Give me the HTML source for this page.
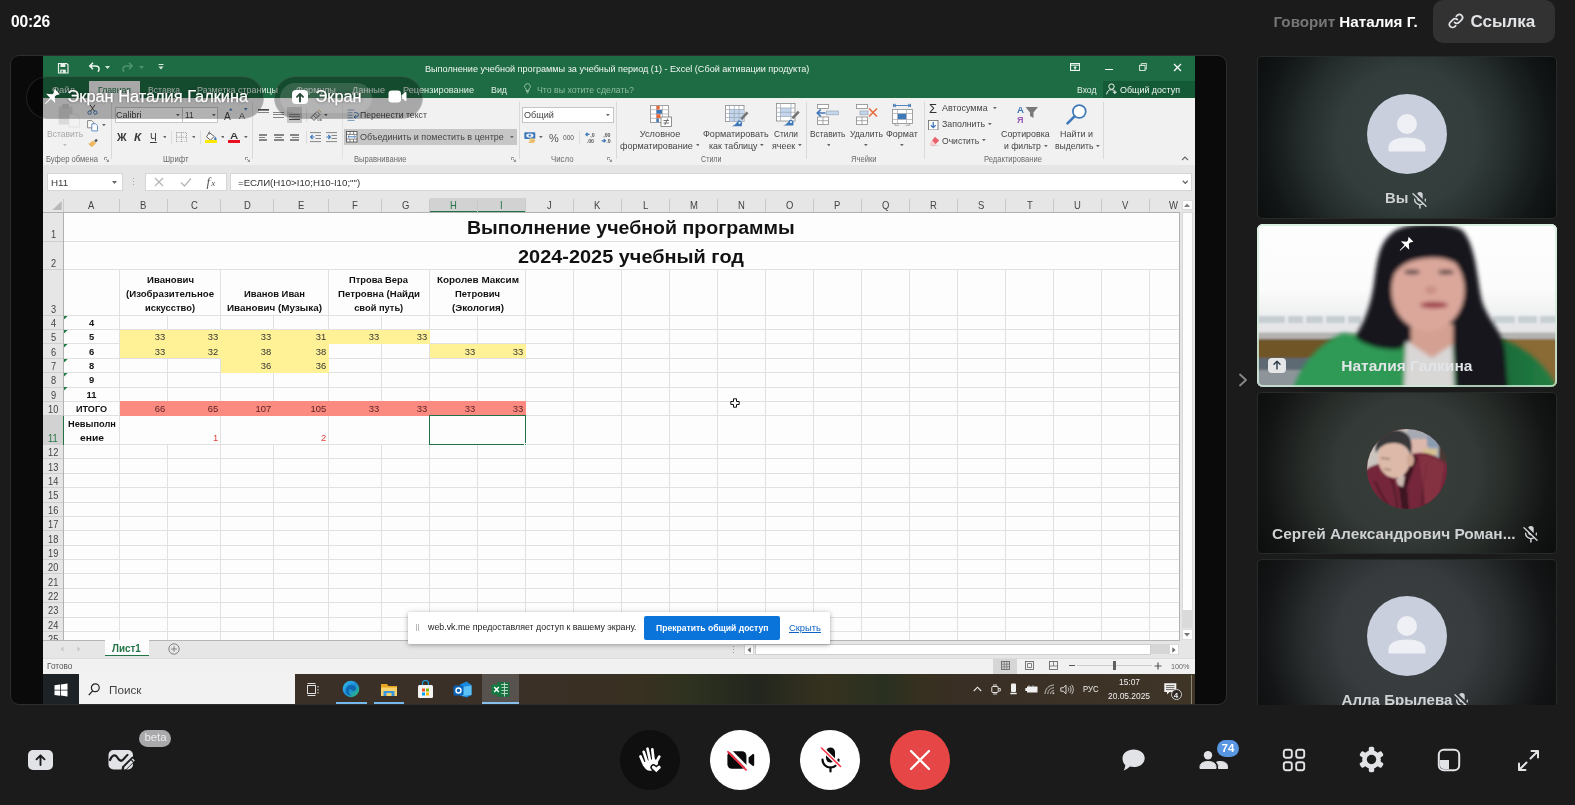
<!DOCTYPE html>
<html lang="ru"><head><meta charset="utf-8"><title>Call</title>
<style>
*{box-sizing:border-box;margin:0;padding:0}
html,body{width:1575px;height:805px;overflow:hidden;background:#1b1b1b;font-family:"Liberation Sans",sans-serif;}
.abs{position:absolute}
#root{position:relative;width:1575px;height:805px;overflow:hidden;background:#1b1b1b;opacity:.999}
.t{position:absolute;white-space:nowrap;line-height:1}
/* top bar */
#timer{left:11px;top:14px;font-size:15.600px;font-weight:bold;color:#fff;letter-spacing:-0.2px}
#speaks{left:1273.500px;top:13.500px;font-size:15.200px;font-weight:bold;color:#fff}
#speaks span{color:#767676}
#linkbtn{left:1433px;top:0;width:122px;height:43px;border-radius:10px;background:#323232}
#linkbtn .t{left:37.500px;top:13px;font-size:17px;font-weight:bold;color:#e1e3e6}
/* screen */
#screen{left:10px;top:55px;width:1217px;height:650px;border-radius:9px;background:#0a0a0a;border:1px solid #2e2e2e;overflow:hidden}
#xl{position:absolute;left:32px;top:0;width:1152px;height:648px;background:#e6e6e6;overflow:hidden;filter:blur(.35px)}
/* tiles */
.tile{position:absolute;left:1257px;width:300px;height:162.600px;border-radius:5px;overflow:hidden;border:1px solid #262a2a}
.av{position:absolute;left:109px;top:36.700px;width:80px;height:80px;border-radius:50%;background:#c9cfdc;overflow:hidden}
.nm{position:absolute;white-space:nowrap;line-height:1;font-weight:bold;font-size:15px;color:#cfd1d3}
/* bottom */
.cbtn{position:absolute;top:730px;width:60px;height:60px;border-radius:50%}
</style></head><body><div id="root">
<div id="timer" class="t">00:26</div>
<div id="speaks" class="t"><span>Говорит</span> Наталия Г.</div>
<div id="linkbtn" class="abs">
<svg class="abs" style="left:14px;top:12px" width="18" height="18" viewBox="0 0 18 18" fill="none" stroke="#e1e3e6" stroke-width="1.7" stroke-linecap="round"><path d="M7.6 10.4a3.1 3.1 0 0 0 4.4 0l2.6-2.6a3.1 3.1 0 0 0-4.4-4.4l-.9.9"/><path d="M10.4 7.6a3.1 3.1 0 0 0-4.4 0l-2.6 2.6a3.1 3.1 0 0 0 4.4 4.4l.9-.9"/></svg>
<div class="t">Ссылка</div></div>
<!-- sidebar tiles -->
<svg width="0" height="0" style="position:absolute"><defs>
<symbol id="person" viewBox="0 0 80 80"><circle cx="40" cy="30" r="10" fill="#eff0f5"/><path d="M22 57v-3.500c0-6 6-9.500 18-9.500s18 3.500 18 9.500V57z" fill="#eff0f5" stroke="#eff0f5" stroke-width="1" stroke-linejoin="round"/></symbol>
<symbol id="micoff" viewBox="0 0 16 18"><mask id="mm"><rect width="16" height="18" fill="#fff"/><path d="M2 1.300L15.300 14.100" stroke="#000" stroke-width="2.400"/></mask><g mask="url(#mm)"><rect x="5.100" y=".9" width="5.600" height="9.300" rx="2.800" fill="#d0d2d5"/><path d="M2.600 8.200a5.400 5.400 0 0 0 10.800 0" fill="none" stroke="#d0d2d5" stroke-width="1.400" stroke-linecap="round"/><path d="M7.900 13.900v3" stroke="#d0d2d5" stroke-width="1.500" stroke-linecap="round"/></g><path d="M1 2.700L14 15.300" stroke="#d0d2d5" stroke-width="1.400" stroke-linecap="round"/></symbol>
</defs></svg>
<div class="tile" style="top:56px;background:radial-gradient(circle 170px at 50% 50%,#354140 0%,#323d3c 41%,#2e3837 47%,#262e2d 60%,#1a2020 73%,#121616 84%,#0c0e0e 100%)">
<div class="av"><svg width="80" height="80"><use href="#person"/></svg></div>
<div class="nm" style="left:127px;top:133.700px;font-size:14.800px">Вы</div>
<svg class="abs" style="left:153.500px;top:133.500px" width="16" height="18"><use href="#micoff"/></svg>
</div>
<!-- tile 2 webcam -->
<div class="tile" id="cam" style="top:224px;height:163px;border:none;border-radius:6px;background:#fbfbfb">
<svg class="abs" style="left:0;top:0" width="300" height="163" viewBox="0 0 300 163">
<defs><filter id="bl" x="-20%" y="-20%" width="140%" height="140%"><feGaussianBlur stdDeviation="2"/></filter><filter id="bl2" x="-20%" y="-20%" width="140%" height="140%"><feGaussianBlur stdDeviation="1"/></filter><filter id="bl3" x="-30%" y="-30%" width="160%" height="160%"><feGaussianBlur stdDeviation="3.500"/></filter>
<linearGradient id="bgw" x1="0" y1="0" x2="0" y2="1"><stop offset="0" stop-color="#fefefe"/><stop offset=".4" stop-color="#fbfbfb"/><stop offset=".56" stop-color="#eeeff0"/></linearGradient>
<linearGradient id="jk" x1="0" y1="0" x2="1" y2="0"><stop offset="0" stop-color="#2f9a55"/><stop offset=".45" stop-color="#2a8d4c"/><stop offset=".7" stop-color="#1a6a38"/><stop offset="1" stop-color="#237f44"/></linearGradient></defs>
<rect width="300" height="163" fill="url(#bgw)"/>
<g filter="url(#bl2)">
<rect x="0" y="92" width="104" height="7" fill="#c6ced3"/><rect x="236" y="92" width="64" height="7" fill="#c8d0d4"/>
<rect x="28" y="92" width="3" height="7" fill="#e8ecee"/><rect x="46" y="92" width="3" height="7" fill="#e8ecee"/><rect x="66" y="92" width="3" height="7" fill="#e8ecee"/><rect x="88" y="92" width="3" height="7" fill="#e8ecee"/><rect x="258" y="92" width="3" height="7" fill="#e8ecee"/><rect x="280" y="92" width="3" height="7" fill="#e8ecee"/>
<rect x="0" y="99" width="300" height="10" fill="#e6e6e8"/>
<rect x="0" y="108.500" width="300" height="6.500" fill="#b4b3b1"/>
<rect x="0" y="115" width="300" height="50" fill="#705428"/>
<rect x="250" y="115" width="50" height="50" fill="#8a6a35"/>
<rect x="0" y="134" width="58" height="30" fill="#5d6973"/><rect x="0" y="146" width="46" height="18" fill="#8e959a"/>
</g>
<g filter="url(#bl)">
<path d="M36 165c6-20 22-44 50-56l40 6 26 50z" fill="#2f9a55"/>
<path d="M120 165l10-50 20-4 50 2 44 2c24 8 42 24 54 44v8z" fill="url(#jk)"/>
<path d="M149 112l-2 53h50l-2-53z" fill="#d9d6d6"/>
<path d="M135 9C147-3 194-3 206 7c12 14 14 44 18 66 4 20 20 32 24 52l3 40h-52l-3-46-46-1-6 7c-14 2-36-2-46-12 10-16 16-32 19-54 3-22 5-40 18-50z" fill="#15151b"/>
<path d="M154 100h42v20l-21 14-21-14z" fill="#d3a092"/>
<ellipse cx="171" cy="66" rx="36.500" ry="41" fill="#dba79b"/>
<path d="M133 58c-3-34 15-53 41-53s41 18 38 50c-6-14-18-22-38-21-22 1-33 7-41 24z" fill="#17161c"/>
<ellipse cx="177" cy="81" rx="14" ry="3.200" fill="#9e3d4c"/>
<ellipse cx="155" cy="48" rx="8" ry="2.300" fill="#4a3b3d"/><ellipse cx="189" cy="48" rx="8" ry="2.300" fill="#4a3b3d"/>
<ellipse cx="174" cy="66" rx="6" ry="4" fill="#c98f85"/>
</g>
</svg>
<div class="abs" style="left:0;top:0;width:300px;height:163px;border:2.500px solid rgba(208,236,216,.8);border-radius:6px"></div>
<svg class="abs" style="left:142px;top:12px" width="15.500" height="15.500" viewBox="0 0 17 17"><path d="M10.500 .8l5.300 5.400-3.600 1-1.400 1.400.4 6.400-4.200-4.100-5.700 5.300-.5-.5 5.300-5.700L2 5.800l6.400.4 1.400-1.400z" fill="#fff"/></svg>
<div class="abs" style="left:11px;top:133.500px;width:18px;height:15px;border-radius:4px;background:#e4e6e8"></div>
<svg class="abs" style="left:15px;top:136px" width="10" height="10" viewBox="0 0 10 10" fill="none" stroke="#2a3a4a" stroke-width="1.400" stroke-linecap="round" stroke-linejoin="round"><path d="M5 9V1.500M2 4.300l3-3 3 3"/></svg>
<div class="nm" style="left:84.300px;top:133.700px;font-size:15.500px;color:#e2e5e8">Наталия Галкина</div>
</div>
<svg class="abs" style="left:1238px;top:373px" width="10" height="14" viewBox="0 0 10 14" fill="none" stroke="#8a8a8a" stroke-width="1.800" stroke-linecap="round" stroke-linejoin="round"><path d="M2 1.500l6 5.500-6 5.500"/></svg>
<!-- tile 3 -->
<div class="tile" style="top:391.500px;background:radial-gradient(circle 170px at 50% 48%,#373e3a 0%,#343a37 41%,#2f3532 47%,#272c29 60%,#1c1f1d 73%,#131514 84%,#0c0e0d 100%)">
<div class="av" style="background:#7a2a34">
<svg width="80" height="80" viewBox="0 0 80 80"><defs><filter id="b3" x="-10%" y="-10%" width="120%" height="120%"><feGaussianBlur stdDeviation="1.100"/></filter></defs><g filter="url(#b3)"><rect x="-5" y="-5" width="90" height="90" fill="#cbc5bf"/><rect x="40" y="-2" width="44" height="32" fill="#a7aab2"/><rect x="44" y="10" width="18" height="16" fill="#dcb7ac"/><rect x="60" y="6" width="14" height="12" fill="#8a9bb0"/><rect x="56" y="20" width="14" height="6" fill="#d4c090"/><rect x="72" y="14" width="12" height="30" fill="#4a3832"/>
<path d="M-4 43C4 36 14 33 21 36l13 17 12-28c9-3 21 0 30 7l10 9v46H-4z" fill="#74283a"/><path d="M8 52c4 10 8 18 16 28M60 34c-2 16-6 30-4 46M22 44c4 10 8 22 8 36" stroke="#591c2a" stroke-width="2.500" fill="none"/>
<path d="M52 26c10 0 20 4 26 10l-6 30-14 10z" fill="#8c3646" opacity=".7"/>
<path d="M46 24l4 6-10 28 2 24h-7l-3-24z" fill="#3d1820"/>
<path d="M29 50l9-3-2 11-5-2z" fill="#cbbab2"/>
<ellipse cx="27" cy="30" rx="16" ry="19" transform="rotate(-8 27 30)" fill="#dcb9a9"/>
<ellipse cx="43.500" cy="31" rx="3.500" ry="6.500" fill="#d0a795"/>
<path d="M9 24C6 8 19 0 30 1c11 1 17 9 14 25-3-8-9-12-17-12-8 0-14 3-18 10z" fill="#37373a"/>
<path d="M14 29l9 1M17 40l7 1" stroke="#9a7a70" stroke-width="1.400"/>
</g></svg></div>
<div class="nm" style="left:14px;top:133px;font-size:15.450px">Сергей Александрович Роман...</div>
<svg class="abs" style="left:265px;top:132.500px" width="16" height="18"><use href="#micoff"/></svg>
</div>
<!-- tile 4 -->
<div class="abs" style="left:1250px;top:555px;width:320px;height:149.700px;overflow:hidden">
<div class="tile" style="left:7px;top:4px;background:radial-gradient(circle 170px at 50% 48%,#3a3f41 0%,#373b3d 41%,#323638 47%,#292d2e 60%,#1d2020 73%,#141516 84%,#0d0e0e 100%)">
<div class="av" style="top:36px"><svg width="80" height="80"><use href="#person"/></svg></div>
<div class="nm" style="left:83.500px;top:131.700px;font-size:15.100px">Алла Брылева</div>
<svg class="abs" style="left:195.500px;top:131.500px" width="16" height="18"><use href="#micoff"/></svg>
</div></div>
<!-- bottom bar -->
<div class="abs" style="left:28px;top:750px;width:25px;height:20px;border-radius:5px;background:#e1e3e6"></div>
<svg class="abs" style="left:34px;top:753px" width="13" height="14" viewBox="0 0 13 14" fill="none" stroke="#1b1b1b" stroke-width="1.900" stroke-linecap="round" stroke-linejoin="round"><path d="M6.500 12V2.500M2.500 6.300l4-4 4 4"/></svg>
<!-- whiteboard -->
<svg class="abs" style="left:107px;top:748px" width="30" height="24" viewBox="0 0 30 24"><rect x="1.500" y="2" width="24.500" height="19.500" rx="5" fill="#e1e3e6"/><path d="M3 12c2-5 5-6 7-3s3 4.500 5 3.500 3-3.500 5.500-5.500" fill="none" stroke="#1b1b1b" stroke-width="2.200" stroke-linecap="round"/><path d="M14 23.500l1.200-5 9.300-9.300a2 2 0 0 1 2.800 0l1 1a2 2 0 0 1 0 2.800L19 22.300z" fill="#1b1b1b"/><path d="M16.800 21.500l.6-2.600 8.400-8.400 2 2-8.400 8.400z" fill="#e1e3e6"/><path d="M24.300 11.800l2 2" stroke="#1b1b1b" stroke-width="1.200"/></svg>
<div class="abs" style="left:139px;top:730px;width:32px;height:17px;border-radius:9px;background:#a9a9ac"></div>
<div class="t" style="left:144.400px;top:732.300px;font-size:11.400px;color:#ececec">beta</div>
<!-- center buttons -->
<div class="cbtn" style="left:620px;background:#0f0f0f"></div>
<svg class="abs" style="left:637px;top:746px" width="27" height="29" viewBox="0 0 27 29"><g stroke="#fff" stroke-width="2.700" stroke-linecap="round" fill="none"><path d="M3.500 10.500L7.200 19"/><path d="M6.700 5.900L10.200 16.500"/><path d="M10.500 2.700L13 14.500"/><path d="M15.300 3.400L16.600 14.500"/><path d="M22.300 10.700L18.600 17.500"/></g><path d="M5.800 16.500L17.500 12.500l3.500 3.500c.5 6-3.500 9.200-8.300 8.700-4-.4-6.200-3.700-6.900-8.200z" fill="#fff"/><path d="M19.300 27.400l-4.400-4.300c-2.300-2.400.8-5.500 3.200-3.600l1.200 1 1.200-1c2.400-1.900 5.500 1.200 3.200 3.600z" fill="#fff" stroke="#0f0f0f" stroke-width="1.500"/></svg>
<div class="cbtn" style="left:710px;background:#fff"></div>
<svg class="abs" style="left:726px;top:748px" width="30" height="24" viewBox="0 0 30 24"><rect x="1.400" y="3.200" width="19" height="17.600" rx="4.500" fill="#0a0a0a"/><path d="M22.600 9.600l3.600-3.200c.8-.7 2-.2 2 .9v9.400c0 1.100-1.200 1.600-2 .9l-3.600-3.200z" fill="#0a0a0a"/><path d="M3.700 2.100L21.700 20.100" stroke="#fff" stroke-width="2.800" stroke-linecap="butt"/><path d="M2 3.800L20 21.800" stroke="#ff3347" stroke-width="1.900" stroke-linecap="round"/></svg>
<div class="cbtn" style="left:800px;background:#fff"></div>
<svg class="abs" style="left:817px;top:746px" width="26" height="28" viewBox="0 0 26 28"><rect x="9" y="1.500" width="9" height="15" rx="4.500" fill="#0a0a0a"/><path d="M5.500 13.500a8 8 0 0 0 16 0" fill="none" stroke="#0a0a0a" stroke-width="2.200" stroke-linecap="round"/><path d="M13.500 21.500v4" stroke="#0a0a0a" stroke-width="2.200" stroke-linecap="round"/><path d="M4.500 2L23.500 20.500" stroke="#fff" stroke-width="4.200" stroke-linecap="round"/><path d="M4.500 2L23.500 20.500" stroke="#ff3347" stroke-width="1.600" stroke-linecap="round"/></svg>
<div class="cbtn" style="left:890px;background:#e64646"></div>
<svg class="abs" style="left:909px;top:749px" width="22" height="22" viewBox="0 0 22 22" stroke="#fff" stroke-width="2.300" stroke-linecap="round"><path d="M2 2l18 18M20 2L2 20"/></svg>
<!-- right icons -->
<svg class="abs" style="left:1121px;top:748px" width="25" height="25" viewBox="0 0 25 25"><path d="M12.700 1.500c6.300 0 11 3.900 11 8.800s-4.700 8.800-11 8.800c-1.300 0-2.500-.2-3.700-.5-1.500 1.400-3.800 3.200-6.500 4 1.200-1.600 1.700-3.800 1.800-5.500C2.500 15.500 1.500 13 1.500 10.300c0-4.900 4.900-8.800 11.200-8.800z" fill="#e1e3e6"/></svg>
<svg class="abs" style="left:1199px;top:750px" width="30" height="20" viewBox="0 0 30 20"><circle cx="9" cy="5.200" r="4.200" fill="#e1e3e6"/><path d="M1 18.500v-1.600c0-3.500 3-5.400 8-5.400s8 1.900 8 5.400v1.600z" fill="#e1e3e6" stroke="#e1e3e6" stroke-linejoin="round"/><path d="M19.500 18.500v-1.800c0-2-.7-3.500-2-4.600 1-.4 2.200-.6 3.500-.6 4.500 0 7.500 1.800 7.500 5v2z" fill="#e1e3e6" stroke="#e1e3e6" stroke-linejoin="round"/></svg>
<div class="abs" style="left:1217px;top:740px;width:22px;height:16.500px;border-radius:9px;background:#5896e2"></div>
<div class="t" style="left:1221.500px;top:742.500px;font-size:11.500px;font-weight:bold;color:#fff">74</div>
<svg class="abs" style="left:1282px;top:748px" width="24" height="24" viewBox="0 0 24 24" fill="none" stroke="#e1e3e6" stroke-width="1.900"><rect x="1.800" y="1.800" width="8" height="8" rx="2.200"/><rect x="14.200" y="1.800" width="8" height="8" rx="2.200"/><rect x="1.800" y="14.200" width="8" height="8" rx="2.200"/><rect x="14.200" y="14.200" width="8" height="8" rx="2.200"/></svg>
<svg class="abs" style="left:1358px;top:746px" width="27" height="27" viewBox="0 0 27 27"><g fill="#e1e3e6"><circle cx="13.500" cy="13.500" r="9.300"/><g id="teeth"><rect x="10.800" y="0.800" width="5.400" height="6" rx="1.600"/><rect x="10.800" y="20.200" width="5.400" height="6" rx="1.600"/></g><use href="#teeth" transform="rotate(60 13.500 13.500)"/><use href="#teeth" transform="rotate(120 13.500 13.500)"/></g><circle cx="13.500" cy="13.500" r="4.700" fill="#1b1b1b"/></svg>
<svg class="abs" style="left:1437px;top:748px" width="24" height="24" viewBox="0 0 24 24"><rect x="1.800" y="1.800" width="20.400" height="20.400" rx="5" fill="none" stroke="#e1e3e6" stroke-width="2"/><path d="M3 12h9v9H7a4 4 0 0 1-4-4z" fill="#e1e3e6"/></svg>
<svg class="abs" style="left:1517px;top:749px" width="23" height="23" viewBox="0 0 23 23" fill="none" stroke="#e1e3e6" stroke-width="2" stroke-linecap="round" stroke-linejoin="round"><path d="M13.500 9.500L21 2M14.500 2H21v6.500M9.500 13.500L2 21M2 14.500V21h6.500"/></svg>
<div id="screen" class="abs"><div id="xl">
<div class="abs" style="left:0px;top:0px;width:1152px;height:42.3px;background:#1e6c43;"></div>
<div class="t" style="left:382px;top:7.63px;font-size:8.7px;line-height:10px;color:#f2f7f4;transform:scaleX(1.047);transform-origin:0 0;">Выполнение учебной программы за учебный период (1) - Excel (Сбой активации продукта)</div>
<svg class="abs" style="left:14px;top:6px;" width="12" height="12" viewBox="0 0 12 12"><path d="M1.500 1.500h8.200l1.300 1.300v8.200h-9.500z" fill="none" stroke="#e9f1ec" stroke-width="1.200"/><rect x="3.400" y="1.800" width="5" height="3.200" fill="#e9f1ec"/><rect x="3.200" y="7.600" width="5.600" height="3.400" fill="#e9f1ec"/><rect x="4.600" y="8.600" width="1.200" height="2" fill="#1f6e43"/></svg>
<svg class="abs" style="left:45px;top:5px;" width="13" height="12" viewBox="0 0 13 12"><path d="M5 1.800L1.800 5 5 8.200M2 5h5.500c2.200 0 3.600 1.400 3.600 3.200 0 1-.4 1.800-1.300 2.400" fill="none" stroke="#f2f7f4" stroke-width="1.500"/></svg>
<svg class="abs" style="left:62px;top:10px;" width="5" height="3" viewBox="0 0 5 3"><path d="M0 0h5L2.500 3z" fill="#d7e6dd"/></svg>
<svg class="abs" style="left:78px;top:5px;" width="13" height="12" viewBox="0 0 13 12"><path d="M8 1.800L11.200 5 8 8.200M11 5H5.500C3.300 5 1.900 6.400 1.900 8.200c0 1 .4 1.800 1.300 2.400" fill="none" stroke="#4f9370" stroke-width="1.500"/></svg>
<svg class="abs" style="left:96px;top:10px;" width="5" height="3" viewBox="0 0 5 3"><path d="M0 0h5L2.500 3z" fill="#4f9370"/></svg>
<svg class="abs" style="left:115px;top:8px;" width="6" height="6" viewBox="0 0 6 6"><path d="M.5 0h5v1h-5zM.5 2.500h5L3 5.500z" fill="#d7e6dd"/></svg>
<svg class="abs" style="left:1027px;top:7.2px;" width="10.2" height="8" viewBox="0 0 10.2 8"><rect x=".55" y=".55" width="9.100" height="6.900" fill="none" stroke="#f2f7f4" stroke-width="1.100"/><path d=".55 2.300h9.100" stroke="#f2f7f4" stroke-width="1"/><path d="M.5 2.200h9.200" stroke="#f2f7f4" stroke-width="1"/><path d="M5.100 3l1.900 1.800H5.800v1.700H4.400V4.800H3.200z" fill="#f2f7f4"/></svg>
<div class="abs" style="left:1062px;top:13px;width:8px;height:1.3px;background:#f2f7f4;"></div>
<svg class="abs" style="left:1096px;top:6.7px;" width="8.4" height="8.2" viewBox="0 0 8.4 8.2"><path d="M2.300 2.300V.6h5.500v5.300H6.100" fill="none" stroke="#dfeae4" stroke-width="1"/><rect x=".6" y="2.400" width="5.500" height="5.200" fill="none" stroke="#dfeae4" stroke-width="1"/></svg>
<svg class="abs" style="left:1130px;top:7px;" width="9" height="9" viewBox="0 0 9 9"><path d="M1 1l7 7M8 1L1 8" stroke="#fff" stroke-width="1.300"/></svg>
<div class="abs" style="left:46px;top:25px;width:50.5px;height:17.3px;background:#f1f1f1;"></div>
<div class="t" style="left:9px;top:28.58px;font-size:9.3px;line-height:10.69px;color:#e4efe8;transform:scaleX(1.006);transform-origin:0 0;">Файл</div>
<div class="t" style="left:55px;top:28.58px;font-size:9.3px;line-height:10.69px;color:#1f6e43;transform:scaleX(0.932);transform-origin:0 0;">Главная</div>
<div class="t" style="left:105px;top:28.58px;font-size:9.3px;line-height:10.69px;color:#e4efe8;transform:scaleX(0.926);transform-origin:0 0;">Вставка</div>
<div class="t" style="left:154px;top:28.58px;font-size:9.3px;line-height:10.69px;color:#e4efe8;transform:scaleX(0.960);transform-origin:0 0;">Разметка страницы</div>
<div class="t" style="left:253px;top:28.58px;font-size:9.3px;line-height:10.69px;color:#e4efe8;transform:scaleX(0.988);transform-origin:0 0;">Формулы</div>
<div class="t" style="left:309px;top:28.58px;font-size:9.3px;line-height:10.69px;color:#e4efe8;transform:scaleX(0.982);transform-origin:0 0;">Данные</div>
<div class="t" style="left:360px;top:28.58px;font-size:9.3px;line-height:10.69px;color:#e4efe8;transform:scaleX(0.989);transform-origin:0 0;">Рецензирование</div>
<div class="t" style="left:448px;top:28.58px;font-size:9.3px;line-height:10.69px;color:#e4efe8;transform:scaleX(0.951);transform-origin:0 0;">Вид</div>
<svg class="abs" style="left:481px;top:27px;" width="7" height="11" viewBox="0 0 7 11"><path d="M3.500 .7a2.800 2.800 0 0 0-1.500 5.200v1.600h3V5.900A2.800 2.800 0 0 0 3.500.7z" fill="none" stroke="#9fc7b0" stroke-width=".9"/><path d="M2.200 8.600h2.600M2.600 9.900h1.800" stroke="#9fc7b0" stroke-width=".9"/></svg>
<div class="t" style="left:493.5px;top:28.58px;font-size:9.3px;line-height:10.69px;color:#8fbda3;transform:scaleX(0.943);transform-origin:0 0;">Что вы хотите сделать?</div>
<div class="t" style="left:1033.5px;top:29.08px;font-size:9.3px;line-height:10.69px;color:#e4efe8;transform:scaleX(0.927);transform-origin:0 0;">Вход</div>
<div class="abs" style="left:1060px;top:25px;width:92px;height:17.3px;background:#155a36;"></div>
<svg class="abs" style="left:1063px;top:27px;" width="11" height="12" viewBox="0 0 11 12"><circle cx="5.500" cy="3.600" r="2.700" fill="none" stroke="#f2f7f4" stroke-width="1"/><path d="M.7 11.300c.3-3 2-4.600 4.800-4.600 1 0 1.800.2 2.500.6" fill="none" stroke="#f2f7f4" stroke-width="1"/><path d="M8.800 7.300v3.800M6.900 9.200h3.800" stroke="#f2f7f4" stroke-width="1"/></svg>
<div class="t" style="left:1077px;top:29.08px;font-size:9.3px;line-height:10.69px;color:#f2f7f4;transform:scaleX(0.960);transform-origin:0 0;">Общий доступ</div>
<div class="abs" style="left:0px;top:42.3px;width:1152px;height:66.4px;background:#f1f1f1;"></div>
<div class="abs" style="left:0px;top:108.7px;width:1152px;height:48px;background:#e6e6e6;"></div>
<div class="abs" style="left:68px;top:46px;width:1px;height:57px;background:#d9d9d9;"></div>
<div class="abs" style="left:209.3px;top:46px;width:1px;height:57px;background:#d9d9d9;"></div>
<div class="abs" style="left:476.2px;top:46px;width:1px;height:57px;background:#d9d9d9;"></div>
<div class="abs" style="left:573.2px;top:46px;width:1px;height:57px;background:#d9d9d9;"></div>
<div class="abs" style="left:763px;top:46px;width:1px;height:57px;background:#d9d9d9;"></div>
<div class="abs" style="left:880.5px;top:46px;width:1px;height:57px;background:#d9d9d9;"></div>
<div class="abs" style="left:1060.2px;top:46px;width:1px;height:57px;background:#d9d9d9;"></div>
<div class="t" style="left:2.5px;top:99.09px;font-size:8.3px;line-height:9.54px;color:#6a6a6a;transform:scaleX(0.922);transform-origin:0 0;">Буфер обмена</div>
<div class="t" style="left:120.25px;top:99.09px;font-size:8.3px;line-height:9.54px;color:#6a6a6a;transform:scaleX(0.934);transform-origin:0 0;">Шрифт</div>
<div class="t" style="left:311.25px;top:99.09px;font-size:8.3px;line-height:9.54px;color:#6a6a6a;transform:scaleX(0.919);transform-origin:0 0;">Выравнивание</div>
<div class="t" style="left:507.75px;top:99.09px;font-size:8.3px;line-height:9.54px;color:#6a6a6a;transform:scaleX(0.943);transform-origin:0 0;">Число</div>
<div class="t" style="left:657.75px;top:99.09px;font-size:8.3px;line-height:9.54px;color:#6a6a6a;transform:scaleX(0.857);transform-origin:0 0;">Стили</div>
<div class="t" style="left:808.25px;top:99.09px;font-size:8.3px;line-height:9.54px;color:#6a6a6a;transform:scaleX(0.916);transform-origin:0 0;">Ячейки</div>
<div class="t" style="left:941px;top:99.09px;font-size:8.3px;line-height:9.54px;color:#6a6a6a;transform:scaleX(0.917);transform-origin:0 0;">Редактирование</div>
<svg class="abs" style="left:60.5px;top:101.3px;" width="5" height="5" viewBox="0 0 5 5"><path d="M.4 3V.4h2.600M2 2l2.600 2.600M4.700 2.600v2.100H2.600" fill="none" stroke="#777" stroke-width=".8"/></svg>
<svg class="abs" style="left:201.5px;top:101.3px;" width="5" height="5" viewBox="0 0 5 5"><path d="M.4 3V.4h2.600M2 2l2.600 2.600M4.700 2.600v2.100H2.600" fill="none" stroke="#777" stroke-width=".8"/></svg>
<svg class="abs" style="left:468px;top:101.3px;" width="5" height="5" viewBox="0 0 5 5"><path d="M.4 3V.4h2.600M2 2l2.600 2.600M4.700 2.600v2.100H2.600" fill="none" stroke="#777" stroke-width=".8"/></svg>
<svg class="abs" style="left:564px;top:101.3px;" width="5" height="5" viewBox="0 0 5 5"><path d="M.4 3V.4h2.600M2 2l2.600 2.600M4.700 2.600v2.100H2.600" fill="none" stroke="#777" stroke-width=".8"/></svg>
<svg class="abs" style="left:1138px;top:100px;" width="8" height="5" viewBox="0 0 8 5"><path d="M1 4l3-3 3 3" fill="none" stroke="#666" stroke-width="1.100"/></svg>
<svg class="abs" style="left:13.5px;top:47px;" width="24" height="24.5" viewBox="0 0 24 24.5"><g opacity=".55"><rect x="1.500" y="3.500" width="14" height="18" rx="1.200" fill="#c9c9c9"/><rect x="5" y="1" width="7" height="4.500" rx="1" fill="#b9b9b9"/><path d="M12 11h7l3.500 3.500V24H12z" fill="#f4f4f4" stroke="#cfcfcf" stroke-width=".8"/></g></svg>
<div class="t" style="left:3.8px;top:72.87px;font-size:9.2px;line-height:10.57px;color:#a6a6a6;transform:scaleX(0.928);transform-origin:0 0;">Вставить</div>
<svg class="abs" style="left:20.02px;top:88.33px;" width="3.96" height="2.34" viewBox="0 0 4.400 2.600"><path d="M0 0h4.400L2.200 2.600z" fill="#bdbdbd"/></svg>
<svg class="abs" style="left:44px;top:47.5px;" width="11" height="11" viewBox="0 0 11 11"><path d="M3 .8l4.600 6.600M8 .8L3.400 7.400" stroke="#4a4a4a" stroke-width="1" fill="none"/><circle cx="2.600" cy="8.600" r="1.700" fill="none" stroke="#3f78b8" stroke-width="1"/><circle cx="8.400" cy="8.600" r="1.700" fill="none" stroke="#3f78b8" stroke-width="1"/></svg>
<svg class="abs" style="left:44px;top:64px;" width="11.5" height="11.5" viewBox="0 0 11.5 11.5"><path d="M.6 .6h4.200l1.800 1.800v5.400h-6z" fill="#fff" stroke="#6a6a6a" stroke-width=".8"/><path d="M4.800 3.800h3.800l1.900 1.900v5.200H4.800z" fill="#fff" stroke="#3f78b8" stroke-width=".8"/></svg>
<svg class="abs" style="left:59.11px;top:68.18px;" width="3.78" height="2.24" viewBox="0 0 4.400 2.600"><path d="M0 0h4.400L2.200 2.600z" fill="#666"/></svg>
<svg class="abs" style="left:45px;top:81.5px;" width="10.5" height="9.5" viewBox="0 0 10.5 9.5"><path d="M6.200 2.800l2-2 1.600 1.600-2 2z" fill="#555"/><path d="M1 5.500l4-3 3 3-4 3.500z" fill="#f0b861"/><path d="M.8 5.700l3 3" stroke="#d99a3a" stroke-width=".8"/></svg>
<div class="abs" style="left:71.5px;top:51.3px;width:68.2px;height:16px;background:#fff;border:1px solid #c6c6c6;"></div>
<div class="abs" style="left:139.7px;top:51.3px;width:35.5px;height:16px;background:#fff;border:1px solid #c6c6c6;border-left:none;"></div>
<div class="t" style="left:73.2px;top:54.27px;font-size:9.2px;line-height:10.57px;color:#444;transform:scaleX(0.978);transform-origin:0 0;">Calibri</div>
<svg class="abs" style="left:133.01px;top:57.68px;" width="3.78" height="2.24" viewBox="0 0 4.400 2.600"><path d="M0 0h4.400L2.200 2.600z" fill="#666"/></svg>
<div class="t" style="left:142px;top:54.27px;font-size:9.2px;line-height:10.57px;color:#444;transform:scaleX(0.900);transform-origin:0 0;">11</div>
<svg class="abs" style="left:169.11px;top:57.68px;" width="3.78" height="2.24" viewBox="0 0 4.400 2.600"><path d="M0 0h4.400L2.200 2.600z" fill="#666"/></svg>
<div class="t" style="left:180.5px;top:53.73px;font-size:10.8px;line-height:12.41px;color:#444;transform:scaleX(0.944);transform-origin:0 0;">A</div>
<svg class="abs" style="left:186px;top:52px;" width="3.5" height="2.5" viewBox="0 0 3.5 2.5"><path d="M0 2.500h3.500L1.750 0z" fill="#3f78b8"/></svg>
<div class="t" style="left:195.8px;top:54.99px;font-size:9.4px;line-height:10.8px;color:#444;transform:scaleX(0.957);transform-origin:0 0;">A</div>
<svg class="abs" style="left:201px;top:52px;" width="3.5" height="2.5" viewBox="0 0 3.5 2.5"><path d="M0 0h3.500L1.750 2.500z" fill="#3f78b8"/></svg>
<div class="t" style="left:74.4px;top:75.55px;font-size:10px;line-height:11.49px;color:#3a3a3a;font-weight:bold;transform:scaleX(1.062);transform-origin:0 0;">Ж</div>
<div class="t" style="left:91px;top:75.55px;font-size:10px;line-height:11.49px;color:#3a3a3a;font-weight:bold;font-style:italic;transform:scaleX(1.171);transform-origin:0 0;">К</div>
<div class="t" style="left:106.7px;top:75.55px;font-size:10px;line-height:11.49px;color:#3a3a3a;transform:scaleX(1.020);transform-origin:0 0;text-decoration:underline;">Ч</div>
<svg class="abs" style="left:119.51px;top:79.68px;" width="3.78" height="2.24" viewBox="0 0 4.400 2.600"><path d="M0 0h4.400L2.200 2.600z" fill="#666"/></svg>
<div class="abs" style="left:128.3px;top:74.5px;width:1px;height:13.5px;background:#dcdcdc;"></div>
<svg class="abs" style="left:133px;top:75.5px;" width="11.5" height="10.5" viewBox="0 0 11.5 10.5"><path d="M.5 .5h10v9.500H.5zM.5 5.200h10M5.500 .5v9.500" fill="none" stroke="#8a8a8a" stroke-width=".8" stroke-dasharray="1.100 1"/></svg>
<svg class="abs" style="left:148.51px;top:79.68px;" width="3.78" height="2.24" viewBox="0 0 4.400 2.600"><path d="M0 0h4.400L2.200 2.600z" fill="#666"/></svg>
<div class="abs" style="left:157.2px;top:74.5px;width:1px;height:13.5px;background:#dcdcdc;"></div>
<svg class="abs" style="left:162px;top:74.5px;" width="12.5" height="10" viewBox="0 0 12.5 10"><path d="M4.200 1.500l5 3.800-3.600 3.900-4-3.400z" fill="#fdfdfd" stroke="#555" stroke-width=".9"/><path d="M4.600 .5c-1 1-.8 2.300.3 3" fill="none" stroke="#555" stroke-width=".8"/><path d="M10.300 5.500c.9 1.300 1.300 2.100 1.300 2.700a1.200 1.200 0 0 1-2.400 0c0-.6.400-1.400 1.100-2.700z" fill="#3f78b8"/></svg>
<div class="abs" style="left:161.8px;top:84px;width:12.3px;height:3px;background:#ffe800;"></div>
<svg class="abs" style="left:177.51px;top:79.68px;" width="3.78" height="2.24" viewBox="0 0 4.400 2.600"><path d="M0 0h4.400L2.200 2.600z" fill="#666"/></svg>
<div class="t" style="left:187.3px;top:74.43px;font-size:9.8px;line-height:11.26px;color:#3a3a3a;font-weight:bold;transform:scaleX(1.159);transform-origin:0 0;">A</div>
<div class="abs" style="left:185.2px;top:84px;width:12.2px;height:3px;background:#e81123;"></div>
<svg class="abs" style="left:200.81px;top:79.68px;" width="3.78" height="2.24" viewBox="0 0 4.400 2.600"><path d="M0 0h4.400L2.200 2.600z" fill="#666"/></svg>
<div class="abs" style="left:215px;top:53.3px;width:10.5px;height:1.3px;background:#858585;"></div>
<div class="abs" style="left:215px;top:55.9px;width:10.5px;height:1.3px;background:#858585;"></div>
<div class="abs" style="left:215px;top:52.9px;width:10.5px;height:0.9px;background:#444;"></div>
<div class="abs" style="left:230.2px;top:55.5px;width:10.5px;height:1.3px;background:#858585;"></div>
<div class="abs" style="left:230.2px;top:58px;width:10.5px;height:1.3px;background:#858585;"></div>
<div class="abs" style="left:230.2px;top:60.5px;width:10.5px;height:1.3px;background:#858585;"></div>
<div class="abs" style="left:243.8px;top:51.2px;width:15.2px;height:16px;background:#c6c6c6;"></div>
<div class="abs" style="left:246px;top:57.5px;width:10.5px;height:1.3px;background:#858585;"></div>
<div class="abs" style="left:246px;top:60px;width:10.5px;height:1.3px;background:#858585;"></div>
<div class="abs" style="left:246px;top:62.7px;width:10.5px;height:1.2px;background:#444;"></div>
<div class="abs" style="left:262.5px;top:52px;width:1px;height:14px;background:#dcdcdc;"></div>
<svg class="abs" style="left:266.5px;top:52.5px;" width="12" height="12" viewBox="0 0 12 12"><path d="M1 8.500l6-6 3 3-6 6z" fill="none" stroke="#555" stroke-width=".9"/><path d="M3.300 6.200l3 3M5 4.500l3 3" stroke="#555" stroke-width=".7"/><path d="M8.500 .8l2.700 2.700" stroke="#c28b2c" stroke-width="1"/><path d="M7 11h4.500M10 9.600l1.500 1.400-1.500 1.400" stroke="#555" stroke-width=".7" fill="none"/></svg>
<svg class="abs" style="left:280.81px;top:57.68px;" width="3.78" height="2.24" viewBox="0 0 4.400 2.600"><path d="M0 0h4.400L2.200 2.600z" fill="#666"/></svg>
<div class="abs" style="left:298.7px;top:46px;width:1px;height:57px;background:#e2e2e2;"></div>
<svg class="abs" style="left:303.5px;top:52.5px;" width="12" height="12.5" viewBox="0 0 12 12.5"><path d="M.5 1h7M.5 3.600h5M.5 6.200h5M.5 8.800h5M.5 11.400h7" stroke="#6b8db5" stroke-width=".9"/><path d="M7 3.600h2.200a2.200 2.200 0 0 1 0 4.400H7.500" fill="none" stroke="#3f78b8" stroke-width="1"/><path d="M8.700 6.300L7 8l1.700 1.700" fill="none" stroke="#3f78b8" stroke-width="1"/></svg>
<div class="t" style="left:317px;top:53.67px;font-size:9.2px;line-height:10.57px;color:#444;transform:scaleX(0.946);transform-origin:0 0;">Перенести текст</div>
<div class="abs" style="left:215.5px;top:78.3px;width:8px;height:1.3px;background:#858585;"></div>
<div class="abs" style="left:215.5px;top:80.8px;width:6px;height:1.3px;background:#858585;"></div>
<div class="abs" style="left:215.5px;top:83.3px;width:8px;height:1.3px;background:#858585;"></div>
<div class="abs" style="left:230.8px;top:78.3px;width:10px;height:1.3px;background:#858585;"></div>
<div class="abs" style="left:232.3px;top:80.8px;width:7px;height:1.3px;background:#858585;"></div>
<div class="abs" style="left:230.8px;top:83.3px;width:10px;height:1.3px;background:#858585;"></div>
<div class="abs" style="left:246.5px;top:78.3px;width:9px;height:1.3px;background:#858585;"></div>
<div class="abs" style="left:249px;top:80.8px;width:6.5px;height:1.3px;background:#858585;"></div>
<div class="abs" style="left:246.5px;top:83.3px;width:9px;height:1.3px;background:#858585;"></div>
<div class="abs" style="left:262.5px;top:74.5px;width:1px;height:13.5px;background:#dcdcdc;"></div>
<svg class="abs" style="left:267px;top:76px;" width="11" height="10.5" viewBox="0 0 11 10.5"><path d="M0 .6h11M5.500 3.500H11M5.500 6.500H11M0 9.600h11" stroke="#7a7a7a" stroke-width=".9"/><path d="M4.600 5H.8M2.600 3L.6 5l2 2" fill="none" stroke="#3f78b8" stroke-width="1.200"/></svg>
<svg class="abs" style="left:282.5px;top:76px;" width="11" height="10.5" viewBox="0 0 11 10.5"><path d="M0 .6h11M5.500 3.500H11M5.500 6.500H11M0 9.600h11" stroke="#7a7a7a" stroke-width=".9"/><path d="M.4 5h3.800M2.400 3l2 2-2 2" fill="none" stroke="#3f78b8" stroke-width="1.200"/></svg>
<div class="abs" style="left:301.3px;top:73.2px;width:172.7px;height:15.8px;background:#c6c6c6;"></div>
<svg class="abs" style="left:303px;top:75px;" width="11.5" height="11.5" viewBox="0 0 11.5 11.5"><rect x=".5" y=".5" width="10.500" height="10.500" fill="#fff" stroke="#555" stroke-width=".9"/><path d="M.5 3.400h10.500M.5 8.100h10.500M4 .5v2.900M7.500 .5v2.900M4 8.100V11M7.500 8.100V11" stroke="#555" stroke-width=".7"/><path d="M2 5.750h7.500M3.300 4.500L2 5.750 3.300 7M8.200 4.500l1.300 1.250L8.200 7" fill="none" stroke="#3f78b8" stroke-width=".9"/></svg>
<div class="t" style="left:317px;top:75.77px;font-size:9.2px;line-height:10.57px;color:#444;transform:scaleX(0.979);transform-origin:0 0;">Объединить и поместить в центре</div>
<svg class="abs" style="left:467.11px;top:79.68px;" width="3.78" height="2.24" viewBox="0 0 4.400 2.600"><path d="M0 0h4.400L2.200 2.600z" fill="#666"/></svg>
<div class="abs" style="left:479.2px;top:51.2px;width:91.6px;height:16px;background:#fff;border:1px solid #c6c6c6;"></div>
<div class="t" style="left:481.2px;top:53.97px;font-size:9.2px;line-height:10.57px;color:#444;transform:scaleX(0.991);transform-origin:0 0;">Общий</div>
<svg class="abs" style="left:563.41px;top:57.68px;" width="3.78" height="2.24" viewBox="0 0 4.400 2.600"><path d="M0 0h4.400L2.200 2.600z" fill="#666"/></svg>
<svg class="abs" style="left:481px;top:75.5px;" width="12.5" height="11.5" viewBox="0 0 12.5 11.5"><rect x=".3" y=".3" width="11" height="6.600" rx=".8" fill="#3f78b8"/><ellipse cx="5.800" cy="3.600" rx="3.600" ry="2.100" fill="#eef3fa"/><circle cx="5.800" cy="3.600" r="1.200" fill="#3f78b8"/><ellipse cx="8" cy="7.300" rx="3" ry="1.100" fill="#f2cf82"/><ellipse cx="8.500" cy="8.800" rx="3" ry="1.100" fill="#e9b657"/><ellipse cx="7.300" cy="10.300" rx="3" ry="1.100" fill="#efc170"/></svg>
<svg class="abs" style="left:496.41px;top:79.88px;" width="3.78" height="2.24" viewBox="0 0 4.400 2.600"><path d="M0 0h4.400L2.200 2.600z" fill="#666"/></svg>
<div class="t" style="left:505.7px;top:75.74px;font-size:11px;line-height:12.64px;color:#555;transform:scaleX(0.992);transform-origin:0 0;">%</div>
<div class="t" style="left:520px;top:77.51px;font-size:6.4px;line-height:7.35px;color:#555;transform:scaleX(1.030);transform-origin:0 0;">000</div>
<div class="abs" style="left:536px;top:74.5px;width:1px;height:13.5px;background:#dcdcdc;"></div>
<svg class="abs" style="left:542px;top:75.5px;" width="10.5" height="11.5" viewBox="0 0 10.5 11.5"><path d="M4.600 2.400H.9M2.500 .8L.9 2.400 2.500 4" fill="none" stroke="#3f78b8" stroke-width="1.300"/><text x="5.200" y="4.600" font-size="5.200" font-weight="bold" fill="#555" font-family="Liberation Sans">,0</text><text x="1.800" y="10.600" font-size="5.200" font-weight="bold" fill="#555" font-family="Liberation Sans">,00</text></svg>
<svg class="abs" style="left:557.5px;top:75.5px;" width="10.5" height="11.5" viewBox="0 0 10.5 11.5"><text x="2.200" y="4.600" font-size="5.200" font-weight="bold" fill="#555" font-family="Liberation Sans">,00</text><path d="M.6 8.800h3.800M2.700 7.200l1.700 1.600-1.700 1.600" fill="none" stroke="#3f78b8" stroke-width="1.300"/><text x="5.200" y="10.600" font-size="5.200" font-weight="bold" fill="#555" font-family="Liberation Sans">,0</text></svg>
<svg class="abs" style="left:606.5px;top:49px;" width="22.5" height="22" viewBox="0 0 22.5 22"><rect x=".5" y=".5" width="18" height="17" fill="#fff" stroke="#8a8a8a" stroke-width=".8"/><path d="M.5 4.700h18M.5 9h18M.5 13.300h18M6.500 .5v17M12.500 .5v17" stroke="#a8a8a8" stroke-width=".7"/><rect x="6.500" y=".8" width="3.200" height="3.700" fill="#e8683c"/><rect x="6.500" y="4.900" width="5.500" height="3.900" fill="#3f78b8"/><rect x="6.500" y="9.200" width="4" height="3.900" fill="#e8683c"/><rect x="6.500" y="13.500" width="2.400" height="3.700" fill="#3f78b8"/><rect x="11" y="12" width="10.500" height="9.500" fill="#fff" stroke="#777" stroke-width=".8"/><path d="M13.500 15.500h5.500M13.500 18h5.500M17.800 13.500L14.800 20" stroke="#555" stroke-width=".8"/></svg>
<div class="t" style="left:596.75px;top:72.87px;font-size:9.2px;line-height:10.57px;color:#444;">Условное</div>
<div class="t" style="left:577.3px;top:84.87px;font-size:9.2px;line-height:10.57px;color:#444;transform:scaleX(0.986);transform-origin:0 0;">форматирование</div>
<svg class="abs" style="left:652.61px;top:87.68px;" width="3.78" height="2.24" viewBox="0 0 4.400 2.600"><path d="M0 0h4.400L2.200 2.600z" fill="#666"/></svg>
<svg class="abs" style="left:682px;top:49px;" width="24" height="22" viewBox="0 0 24 22"><rect x=".5" y=".5" width="18.500" height="16" fill="#fff" stroke="#8a8a8a" stroke-width=".8"/><rect x="4.500" y="4.500" width="14.500" height="12" fill="#c3d6ec"/><path d="M.5 4.500h18.500M.5 8.500h18.500M.5 12.500h18.500M4.500 .5v16M9.300 .5v16M14 .5v16" stroke="#9aa6b4" stroke-width=".7"/><path d="M15.300 13.300l6.300-6.800 1.900 1.700-6.300 6.800z" fill="#757575"/><path d="M6.500 21.300c3-1 5-3 6.600-5.600 1.500-.8 3.600.3 4 2.200l-.3 3.400z" fill="#3f78b8"/><circle cx="14.600" cy="17.800" r="1.100" fill="#e8eef6"/></svg>
<div class="t" style="left:659.65px;top:72.87px;font-size:9.2px;line-height:10.57px;color:#444;transform:scaleX(0.984);transform-origin:0 0;">Форматировать</div>
<div class="t" style="left:665.9px;top:84.87px;font-size:9.2px;line-height:10.57px;color:#444;transform:scaleX(0.965);transform-origin:0 0;">как таблицу</div>
<svg class="abs" style="left:716.81px;top:87.68px;" width="3.78" height="2.24" viewBox="0 0 4.400 2.600"><path d="M0 0h4.400L2.200 2.600z" fill="#666"/></svg>
<svg class="abs" style="left:733px;top:47px;" width="23.5" height="24" viewBox="0 0 23.5 24"><rect x=".5" y=".5" width="18.500" height="17.500" fill="#fff" stroke="#8a8a8a" stroke-width=".8"/><rect x="4.500" y="5" width="10.500" height="8.500" fill="#c3d6ec"/><path d="M.5 5h18.500M.5 9.300h18.500M.5 13.500h18.500M4.500 .5v17.500M15 .5v17.500" stroke="#9aa6b4" stroke-width=".7"/><path d="M15.500 14.600l6.300-6.800 1.900 1.700-6.300 6.800z" fill="#757575"/><path d="M7 22.600c3-1 5-3 6.600-5.600 1.500-.8 3.600.3 4 2.200l-.3 3.400z" fill="#3f78b8"/><circle cx="15" cy="19.100" r="1.100" fill="#e8eef6"/></svg>
<div class="t" style="left:731.4px;top:72.87px;font-size:9.2px;line-height:10.57px;color:#444;transform:scaleX(0.906);transform-origin:0 0;">Стили</div>
<div class="t" style="left:729.05px;top:84.87px;font-size:9.2px;line-height:10.57px;color:#444;transform:scaleX(0.969);transform-origin:0 0;">ячеек</div>
<svg class="abs" style="left:754.91px;top:87.68px;" width="3.78" height="2.24" viewBox="0 0 4.400 2.600"><path d="M0 0h4.400L2.200 2.600z" fill="#666"/></svg>
<svg class="abs" style="left:773px;top:48px;" width="23" height="21" viewBox="0 0 23 21"><rect x="1.500" y=".5" width="11" height="4" fill="#fff" stroke="#8a8a8a" stroke-width=".8"/><rect x="1.500" y="13" width="11" height="7.500" fill="#fff" stroke="#8a8a8a" stroke-width=".8"/><path d="M1.500 16.700h11M7 13v7.500" stroke="#8a8a8a" stroke-width=".7"/><rect x="10.500" y="7" width="12" height="3.800" fill="#c3d6ec" stroke="#9aa6b4" stroke-width=".7"/><path d="M9.500 9H1.500M4.800 5.500L1.300 9l3.500 3.500" fill="none" stroke="#3f78b8" stroke-width="1.700"/></svg>
<div class="t" style="left:767.25px;top:73.17px;font-size:9.2px;line-height:10.57px;color:#444;transform:scaleX(0.910);transform-origin:0 0;">Вставить</div>
<svg class="abs" style="left:783.51px;top:88.38px;" width="3.78" height="2.24" viewBox="0 0 4.400 2.600"><path d="M0 0h4.400L2.200 2.600z" fill="#666"/></svg>
<svg class="abs" style="left:813px;top:48px;" width="22" height="21" viewBox="0 0 22 21"><rect x=".5" y=".5" width="11" height="4" fill="#fff" stroke="#8a8a8a" stroke-width=".8"/><rect x=".5" y="13" width="11" height="7.500" fill="#fff" stroke="#8a8a8a" stroke-width=".8"/><path d="M.5 16.700h11M6 13v7.500" stroke="#8a8a8a" stroke-width=".7"/><rect x="4" y="7" width="8" height="3.800" fill="#c3d6ec" stroke="#9aa6b4" stroke-width=".7"/><path d="M13 4.500l8 8M21 4.500l-8 8" stroke="#e8683c" stroke-width="1.500"/></svg>
<div class="t" style="left:806.5px;top:73.17px;font-size:9.2px;line-height:10.57px;color:#444;transform:scaleX(0.939);transform-origin:0 0;">Удалить</div>
<svg class="abs" style="left:821.11px;top:88.38px;" width="3.78" height="2.24" viewBox="0 0 4.400 2.600"><path d="M0 0h4.400L2.200 2.600z" fill="#666"/></svg>
<svg class="abs" style="left:848.5px;top:46.5px;" width="21.5" height="23" viewBox="0 0 21.5 23"><path d="M1.500 2.500h17M1.500 .8v3.400M18.500 .8v3.400M4 1l-2.500 1.500L4 4M16 1l2.500 1.500L16 4" fill="none" stroke="#3f78b8" stroke-width=".9"/><rect x=".5" y="6.500" width="20" height="14" fill="#fff" stroke="#8a8a8a" stroke-width=".8"/><path d="M.5 10.500h20M.5 16.500h20M5.500 6.500v14M14.500 6.500v14" stroke="#a8a8a8" stroke-width=".7"/><rect x="5.800" y="10.800" width="8.400" height="5.400" fill="#3f78b8"/><path d="M3 20.500v1.800h4M17.500 20.500v1.800h-4" fill="none" stroke="#8a8a8a" stroke-width=".7"/></svg>
<div class="t" style="left:843.3px;top:73.17px;font-size:9.2px;line-height:10.57px;color:#444;transform:scaleX(0.973);transform-origin:0 0;">Формат</div>
<svg class="abs" style="left:857.21px;top:88.38px;" width="3.78" height="2.24" viewBox="0 0 4.400 2.600"><path d="M0 0h4.400L2.200 2.600z" fill="#666"/></svg>
<div class="t" style="left:886px;top:46.64px;font-size:12px;line-height:13.79px;color:#333;transform:scaleX(1.078);transform-origin:0 0;">Σ</div>
<div class="t" style="left:898.7px;top:47.47px;font-size:9.2px;line-height:10.57px;color:#444;transform:scaleX(0.974);transform-origin:0 0;">Автосумма</div>
<svg class="abs" style="left:950.11px;top:51.28px;" width="3.78" height="2.24" viewBox="0 0 4.400 2.600"><path d="M0 0h4.400L2.200 2.600z" fill="#666"/></svg>
<svg class="abs" style="left:885px;top:63.5px;" width="10.5" height="10.5" viewBox="0 0 10.5 10.5"><rect x=".5" y=".5" width="9.500" height="9.500" fill="#fff" stroke="#777" stroke-width=".9"/><path d="M5.250 2v5.500M2.800 5.300l2.450 2.400L7.700 5.300" fill="none" stroke="#3f78b8" stroke-width="1.300"/></svg>
<div class="t" style="left:898.7px;top:63.17px;font-size:9.2px;line-height:10.57px;color:#444;transform:scaleX(0.956);transform-origin:0 0;">Заполнить</div>
<svg class="abs" style="left:945.11px;top:66.98px;" width="3.78" height="2.24" viewBox="0 0 4.400 2.600"><path d="M0 0h4.400L2.200 2.600z" fill="#666"/></svg>
<svg class="abs" style="left:885.5px;top:79.5px;" width="11" height="10" viewBox="0 0 11 10"><path d="M6 .8l4.200 3.800-5 5H2.500L.8 7.800z" fill="#e8606a"/><path d="M2.800 4.200l3.800 3.800-1.400 1.600H2.500L.8 7.800z" fill="#fbd0d4"/><path d="M1.500 9.700h8" stroke="#bbb" stroke-width=".6"/></svg>
<div class="t" style="left:898.7px;top:79.67px;font-size:9.2px;line-height:10.57px;color:#444;transform:scaleX(0.931);transform-origin:0 0;">Очистить</div>
<svg class="abs" style="left:939.21px;top:83.48px;" width="3.78" height="2.24" viewBox="0 0 4.400 2.600"><path d="M0 0h4.400L2.200 2.600z" fill="#666"/></svg>
<div class="t" style="left:973.5px;top:48.43px;font-size:9.8px;line-height:11.26px;color:#3f78b8;font-weight:bold;transform:scaleX(0.989);transform-origin:0 0;">А</div>
<div class="t" style="left:973.8px;top:58.43px;font-size:9.8px;line-height:11.26px;color:#9b59b6;font-weight:bold;transform:scaleX(0.923);transform-origin:0 0;">Я</div>
<svg class="abs" style="left:981.5px;top:50px;" width="13.5" height="13" viewBox="0 0 13.5 13"><path d="M.5 1h12.500L8.500 6.500V12l-3.500-2V6.500z" fill="#7a7a7a"/></svg>
<div class="t" style="left:958.4px;top:73.17px;font-size:9.2px;line-height:10.57px;color:#444;transform:scaleX(0.966);transform-origin:0 0;">Сортировка</div>
<div class="t" style="left:961.35px;top:84.67px;font-size:9.2px;line-height:10.57px;color:#444;transform:scaleX(0.942);transform-origin:0 0;">и фильтр</div>
<svg class="abs" style="left:1000.91px;top:88.58px;" width="3.78" height="2.24" viewBox="0 0 4.400 2.600"><path d="M0 0h4.400L2.200 2.600z" fill="#666"/></svg>
<svg class="abs" style="left:1023px;top:48px;" width="21.5" height="20.5" viewBox="0 0 21.5 20.5"><circle cx="13.300" cy="7.500" r="6.400" fill="#fff" stroke="#3f78b8" stroke-width="1.700"/><path d="M8.500 12.300L1.500 19.300" stroke="#3f78b8" stroke-width="2.600" stroke-linecap="round"/></svg>
<div class="t" style="left:1017.3px;top:73.17px;font-size:9.2px;line-height:10.57px;color:#444;transform:scaleX(0.972);transform-origin:0 0;">Найти и</div>
<div class="t" style="left:1011.7px;top:84.67px;font-size:9.2px;line-height:10.57px;color:#444;transform:scaleX(0.937);transform-origin:0 0;">выделить</div>
<svg class="abs" style="left:1053.01px;top:88.58px;" width="3.78" height="2.24" viewBox="0 0 4.400 2.600"><path d="M0 0h4.400L2.200 2.600z" fill="#666"/></svg>
<div class="abs" style="left:3.5px;top:117px;width:76.5px;height:17.7px;background:#fff;border:1px solid #d6d6d6;"></div>
<div class="t" style="left:7.8px;top:121.21px;font-size:9.6px;line-height:11.03px;color:#3b3b3b;transform:scaleX(1.018);transform-origin:0 0;">H11</div>
<svg class="abs" style="left:69px;top:124.5px;" width="5" height="3" viewBox="0 0 5 3"><path d="M0 0h5L2.500 3z" fill="#666"/></svg>
<div class="abs" style="left:90.3px;top:121.5px;width:1px;height:1.2px;background:#a8a8a8;"></div>
<div class="abs" style="left:90.3px;top:124.5px;width:1px;height:1.2px;background:#a8a8a8;"></div>
<div class="abs" style="left:90.3px;top:127.5px;width:1px;height:1.2px;background:#a8a8a8;"></div>
<div class="abs" style="left:102px;top:117px;width:82.3px;height:17.7px;background:#fff;border:1px solid #d6d6d6;"></div>
<svg class="abs" style="left:111px;top:120.5px;" width="10" height="10" viewBox="0 0 10 10"><path d="M1 1l8 8M9 1L1 9" stroke="#b5b5b5" stroke-width="1.200"/></svg>
<svg class="abs" style="left:137px;top:120.5px;" width="12" height="10" viewBox="0 0 12 10"><path d="M1 5.500l3.500 3.500L11 1.500" fill="none" stroke="#b5b5b5" stroke-width="1.300"/></svg>
<div class="t" style="left:163.5px;top:118.74px;font-size:13px;line-height:14.94px;color:#555;font-style:italic;font-family:'Liberation Serif',serif;">f</div>
<div class="t" style="left:168.3px;top:122.45px;font-size:9px;line-height:10.34px;color:#555;font-style:italic;font-family:'Liberation Serif',serif;">x</div>
<div class="abs" style="left:186.5px;top:117px;width:962.5px;height:17.7px;background:#fff;border:1px solid #d6d6d6;"></div>
<div class="t" style="left:194.5px;top:121.14px;font-size:9.9px;line-height:11.38px;color:#333;transform:scaleX(0.981);transform-origin:0 0;">=ЕСЛИ(H10&gt;I10;H10-I10;&quot;&quot;)</div>
<svg class="abs" style="left:1138.7px;top:123.8px;" width="6.6" height="4.4" viewBox="0 0 6.6 4.4"><path d="M.8 .8l2.500 2.600L5.800 .8" fill="none" stroke="#6a6a6a" stroke-width="1.300"/></svg>
<div class="abs" style="left:0px;top:141.7px;width:1137px;height:15px;background:#e6e6e6;"></div>
<div class="abs" style="left:0px;top:156.5px;width:20.5px;height:427.5px;background:#e6e6e6;"></div>
<div class="abs" style="left:20.5px;top:156.5px;width:1116.5px;height:427.5px;background:#fdfdfd;"></div>
<div class="abs" style="left:386.5px;top:141.7px;width:96px;height:14px;background:#d2d2d2;"></div>
<div class="abs" style="left:386.5px;top:155.2px;width:96px;height:1.5px;background:#217346;"></div>
<div class="abs" style="left:0px;top:359.8px;width:20px;height:28.8px;background:#d2d2d2;"></div>
<div class="abs" style="left:76.5px;top:273.57px;width:310px;height:14.38px;background:#fff296;"></div>
<div class="abs" style="left:76.5px;top:287.95px;width:209px;height:14.38px;background:#fff296;"></div>
<div class="abs" style="left:386.5px;top:287.95px;width:96px;height:14.38px;background:#fff296;"></div>
<div class="abs" style="left:177.5px;top:302.32px;width:108px;height:14.38px;background:#fff296;"></div>
<div class="abs" style="left:76.5px;top:345.45px;width:406px;height:14.38px;background:#fb8b80;"></div>
<div class="abs" style="left:76px;top:213.8px;width:1px;height:370.2px;background:#e1e1e1;"></div>
<div class="abs" style="left:124px;top:213.8px;width:1px;height:370.2px;background:#e1e1e1;"></div>
<div class="abs" style="left:177px;top:213.8px;width:1px;height:370.2px;background:#e1e1e1;"></div>
<div class="abs" style="left:230px;top:213.8px;width:1px;height:370.2px;background:#e1e1e1;"></div>
<div class="abs" style="left:285px;top:213.8px;width:1px;height:370.2px;background:#e1e1e1;"></div>
<div class="abs" style="left:338px;top:213.8px;width:1px;height:370.2px;background:#e1e1e1;"></div>
<div class="abs" style="left:386px;top:213.8px;width:1px;height:370.2px;background:#e1e1e1;"></div>
<div class="abs" style="left:434px;top:213.8px;width:1px;height:370.2px;background:#e1e1e1;"></div>
<div class="abs" style="left:482px;top:213.8px;width:1px;height:370.2px;background:#e1e1e1;"></div>
<div class="abs" style="left:530px;top:213.8px;width:1px;height:370.2px;background:#e1e1e1;"></div>
<div class="abs" style="left:578px;top:213.8px;width:1px;height:370.2px;background:#e1e1e1;"></div>
<div class="abs" style="left:626px;top:213.8px;width:1px;height:370.2px;background:#e1e1e1;"></div>
<div class="abs" style="left:674px;top:213.8px;width:1px;height:370.2px;background:#e1e1e1;"></div>
<div class="abs" style="left:722px;top:213.8px;width:1px;height:370.2px;background:#e1e1e1;"></div>
<div class="abs" style="left:770px;top:213.8px;width:1px;height:370.2px;background:#e1e1e1;"></div>
<div class="abs" style="left:818px;top:213.8px;width:1px;height:370.2px;background:#e1e1e1;"></div>
<div class="abs" style="left:866px;top:213.8px;width:1px;height:370.2px;background:#e1e1e1;"></div>
<div class="abs" style="left:914px;top:213.8px;width:1px;height:370.2px;background:#e1e1e1;"></div>
<div class="abs" style="left:962px;top:213.8px;width:1px;height:370.2px;background:#e1e1e1;"></div>
<div class="abs" style="left:1010px;top:213.8px;width:1px;height:370.2px;background:#e1e1e1;"></div>
<div class="abs" style="left:1058px;top:213.8px;width:1px;height:370.2px;background:#e1e1e1;"></div>
<div class="abs" style="left:1106px;top:213.8px;width:1px;height:370.2px;background:#e1e1e1;"></div>
<div class="abs" style="left:20.5px;top:184.5px;width:1116.5px;height:1px;background:#e1e1e1;"></div>
<div class="abs" style="left:20.5px;top:213.3px;width:1116.5px;height:1px;background:#e1e1e1;"></div>
<div class="abs" style="left:20.5px;top:258.7px;width:1116.5px;height:1px;background:#e1e1e1;"></div>
<div class="abs" style="left:20.5px;top:273.07px;width:1116.5px;height:1px;background:#e1e1e1;"></div>
<div class="abs" style="left:20.5px;top:287.45px;width:1116.5px;height:1px;background:#e1e1e1;"></div>
<div class="abs" style="left:20.5px;top:301.82px;width:1116.5px;height:1px;background:#e1e1e1;"></div>
<div class="abs" style="left:20.5px;top:316.2px;width:1116.5px;height:1px;background:#e1e1e1;"></div>
<div class="abs" style="left:20.5px;top:330.57px;width:1116.5px;height:1px;background:#e1e1e1;"></div>
<div class="abs" style="left:20.5px;top:344.95px;width:1116.5px;height:1px;background:#e1e1e1;"></div>
<div class="abs" style="left:20.5px;top:359.32px;width:1116.5px;height:1px;background:#e1e1e1;"></div>
<div class="abs" style="left:20.5px;top:388.07px;width:1116.5px;height:1px;background:#e1e1e1;"></div>
<div class="abs" style="left:20.5px;top:402.45px;width:1116.5px;height:1px;background:#e1e1e1;"></div>
<div class="abs" style="left:20.5px;top:416.82px;width:1116.5px;height:1px;background:#e1e1e1;"></div>
<div class="abs" style="left:20.5px;top:431.2px;width:1116.5px;height:1px;background:#e1e1e1;"></div>
<div class="abs" style="left:20.5px;top:445.57px;width:1116.5px;height:1px;background:#e1e1e1;"></div>
<div class="abs" style="left:20.5px;top:459.95px;width:1116.5px;height:1px;background:#e1e1e1;"></div>
<div class="abs" style="left:20.5px;top:474.33px;width:1116.5px;height:1px;background:#e1e1e1;"></div>
<div class="abs" style="left:20.5px;top:488.7px;width:1116.5px;height:1px;background:#e1e1e1;"></div>
<div class="abs" style="left:20.5px;top:503.08px;width:1116.5px;height:1px;background:#e1e1e1;"></div>
<div class="abs" style="left:20.5px;top:517.45px;width:1116.5px;height:1px;background:#e1e1e1;"></div>
<div class="abs" style="left:20.5px;top:531.83px;width:1116.5px;height:1px;background:#e1e1e1;"></div>
<div class="abs" style="left:20.5px;top:546.2px;width:1116.5px;height:1px;background:#e1e1e1;"></div>
<div class="abs" style="left:20.5px;top:560.58px;width:1116.5px;height:1px;background:#e1e1e1;"></div>
<div class="abs" style="left:20.5px;top:574.95px;width:1116.5px;height:1px;background:#e1e1e1;"></div>
<div class="abs" style="left:124px;top:214.3px;width:1px;height:44.4px;background:#fdfdfd;"></div>
<div class="abs" style="left:230px;top:214.3px;width:1px;height:44.4px;background:#fdfdfd;"></div>
<div class="abs" style="left:338px;top:214.3px;width:1px;height:44.4px;background:#fdfdfd;"></div>
<div class="abs" style="left:434px;top:214.3px;width:1px;height:44.4px;background:#fdfdfd;"></div>
<div class="abs" style="left:76.5px;top:273.57px;width:310px;height:14.38px;background:#fff296;"></div>
<div class="abs" style="left:76.5px;top:287.95px;width:209px;height:14.38px;background:#fff296;"></div>
<div class="abs" style="left:386.5px;top:287.95px;width:96px;height:14.38px;background:#fff296;"></div>
<div class="abs" style="left:177.5px;top:302.32px;width:108px;height:14.38px;background:#fff296;"></div>
<div class="abs" style="left:76.5px;top:345.45px;width:406px;height:14.38px;background:#fb8b80;"></div>
<div class="abs" style="left:124px;top:360.32px;width:1px;height:27.75px;background:#fdfdfd;"></div>
<div class="abs" style="left:230px;top:360.32px;width:1px;height:27.75px;background:#fdfdfd;"></div>
<div class="abs" style="left:338px;top:360.32px;width:1px;height:27.75px;background:#fdfdfd;"></div>
<div class="abs" style="left:434px;top:360.32px;width:1px;height:27.75px;background:#fdfdfd;"></div>
<div class="abs" style="left:0px;top:156px;width:1137px;height:1px;background:#b1b1b1;"></div>
<div class="abs" style="left:20px;top:156.5px;width:1px;height:427.5px;background:#b1b1b1;"></div>
<div class="abs" style="left:19.6px;top:359.8px;width:1.2px;height:28.8px;background:#217346;"></div>
<div class="t" style="left:45.34px;top:143.58px;font-size:10.3px;line-height:11.83px;color:#444;transform:scaleX(0.920);transform-origin:0 0;">A</div>
<div class="abs" style="left:76px;top:143px;width:1px;height:13px;background:#c9c9c9;"></div>
<div class="t" style="left:97.34px;top:143.58px;font-size:10.3px;line-height:11.83px;color:#444;transform:scaleX(0.920);transform-origin:0 0;">B</div>
<div class="abs" style="left:124px;top:143px;width:1px;height:13px;background:#c9c9c9;"></div>
<div class="t" style="left:147.58px;top:143.58px;font-size:10.3px;line-height:11.83px;color:#444;transform:scaleX(0.920);transform-origin:0 0;">C</div>
<div class="abs" style="left:177px;top:143px;width:1px;height:13px;background:#c9c9c9;"></div>
<div class="t" style="left:200.58px;top:143.58px;font-size:10.3px;line-height:11.83px;color:#444;transform:scaleX(0.920);transform-origin:0 0;">D</div>
<div class="abs" style="left:230px;top:143px;width:1px;height:13px;background:#c9c9c9;"></div>
<div class="t" style="left:254.84px;top:143.58px;font-size:10.3px;line-height:11.83px;color:#444;transform:scaleX(0.920);transform-origin:0 0;">E</div>
<div class="abs" style="left:285px;top:143px;width:1px;height:13px;background:#c9c9c9;"></div>
<div class="t" style="left:309.11px;top:143.58px;font-size:10.3px;line-height:11.83px;color:#444;transform:scaleX(0.920);transform-origin:0 0;">F</div>
<div class="abs" style="left:338px;top:143px;width:1px;height:13px;background:#c9c9c9;"></div>
<div class="t" style="left:358.81px;top:143.58px;font-size:10.3px;line-height:11.83px;color:#444;transform:scaleX(0.920);transform-origin:0 0;">G</div>
<div class="abs" style="left:386px;top:143px;width:1px;height:13px;background:#c9c9c9;"></div>
<div class="t" style="left:407.08px;top:143.58px;font-size:10.3px;line-height:11.83px;color:#217346;transform:scaleX(0.920);transform-origin:0 0;">H</div>
<div class="abs" style="left:434px;top:143px;width:1px;height:13px;background:#c9c9c9;"></div>
<div class="t" style="left:457.18px;top:143.58px;font-size:10.3px;line-height:11.83px;color:#217346;transform:scaleX(0.920);transform-origin:0 0;">I</div>
<div class="abs" style="left:482px;top:143px;width:1px;height:13px;background:#c9c9c9;"></div>
<div class="t" style="left:504.13px;top:143.58px;font-size:10.3px;line-height:11.83px;color:#444;transform:scaleX(0.920);transform-origin:0 0;">J</div>
<div class="abs" style="left:530px;top:143px;width:1px;height:13px;background:#c9c9c9;"></div>
<div class="t" style="left:551.34px;top:143.58px;font-size:10.3px;line-height:11.83px;color:#444;transform:scaleX(0.920);transform-origin:0 0;">K</div>
<div class="abs" style="left:578px;top:143px;width:1px;height:13px;background:#c9c9c9;"></div>
<div class="t" style="left:599.86px;top:143.58px;font-size:10.3px;line-height:11.83px;color:#444;transform:scaleX(0.920);transform-origin:0 0;">L</div>
<div class="abs" style="left:626px;top:143px;width:1px;height:13px;background:#c9c9c9;"></div>
<div class="t" style="left:646.55px;top:143.58px;font-size:10.3px;line-height:11.83px;color:#444;transform:scaleX(0.920);transform-origin:0 0;">M</div>
<div class="abs" style="left:674px;top:143px;width:1px;height:13px;background:#c9c9c9;"></div>
<div class="t" style="left:695.08px;top:143.58px;font-size:10.3px;line-height:11.83px;color:#444;transform:scaleX(0.920);transform-origin:0 0;">N</div>
<div class="abs" style="left:722px;top:143px;width:1px;height:13px;background:#c9c9c9;"></div>
<div class="t" style="left:742.81px;top:143.58px;font-size:10.3px;line-height:11.83px;color:#444;transform:scaleX(0.920);transform-origin:0 0;">O</div>
<div class="abs" style="left:770px;top:143px;width:1px;height:13px;background:#c9c9c9;"></div>
<div class="t" style="left:791.34px;top:143.58px;font-size:10.3px;line-height:11.83px;color:#444;transform:scaleX(0.920);transform-origin:0 0;">P</div>
<div class="abs" style="left:818px;top:143px;width:1px;height:13px;background:#c9c9c9;"></div>
<div class="t" style="left:838.81px;top:143.58px;font-size:10.3px;line-height:11.83px;color:#444;transform:scaleX(0.920);transform-origin:0 0;">Q</div>
<div class="abs" style="left:866px;top:143px;width:1px;height:13px;background:#c9c9c9;"></div>
<div class="t" style="left:887.08px;top:143.58px;font-size:10.3px;line-height:11.83px;color:#444;transform:scaleX(0.920);transform-origin:0 0;">R</div>
<div class="abs" style="left:914px;top:143px;width:1px;height:13px;background:#c9c9c9;"></div>
<div class="t" style="left:935.34px;top:143.58px;font-size:10.3px;line-height:11.83px;color:#444;transform:scaleX(0.920);transform-origin:0 0;">S</div>
<div class="abs" style="left:962px;top:143px;width:1px;height:13px;background:#c9c9c9;"></div>
<div class="t" style="left:983.61px;top:143.58px;font-size:10.3px;line-height:11.83px;color:#444;transform:scaleX(0.920);transform-origin:0 0;">T</div>
<div class="abs" style="left:1010px;top:143px;width:1px;height:13px;background:#c9c9c9;"></div>
<div class="t" style="left:1031.08px;top:143.58px;font-size:10.3px;line-height:11.83px;color:#444;transform:scaleX(0.920);transform-origin:0 0;">U</div>
<div class="abs" style="left:1058px;top:143px;width:1px;height:13px;background:#c9c9c9;"></div>
<div class="t" style="left:1079.34px;top:143.58px;font-size:10.3px;line-height:11.83px;color:#444;transform:scaleX(0.920);transform-origin:0 0;">V</div>
<div class="abs" style="left:1106px;top:143px;width:1px;height:13px;background:#c9c9c9;"></div>
<div class="t" style="left:1126.03px;top:143.58px;font-size:10.3px;line-height:11.83px;color:#444;transform:scaleX(0.920);transform-origin:0 0;">W</div>
<div class="abs" style="left:20px;top:143px;width:1px;height:13px;background:#c9c9c9;"></div>
<svg class="abs" style="left:9.3px;top:144.8px;" width="9.7" height="9.4" viewBox="0 0 9.7 9.4"><path d="M9.700 0v9.400H0z" fill="#b9b9b9"/></svg>
<div class="t" style="left:7.63px;top:172.3px;font-size:10.5px;line-height:12.06px;color:#444;transform:scaleX(0.880);transform-origin:0 0;">1</div>
<div class="abs" style="left:0px;top:184.5px;width:20px;height:1px;background:#cfcfcf;"></div>
<div class="t" style="left:7.63px;top:201.1px;font-size:10.5px;line-height:12.06px;color:#444;transform:scaleX(0.880);transform-origin:0 0;">2</div>
<div class="abs" style="left:0px;top:213.3px;width:20px;height:1px;background:#cfcfcf;"></div>
<div class="t" style="left:7.63px;top:246.5px;font-size:10.5px;line-height:12.06px;color:#444;transform:scaleX(0.880);transform-origin:0 0;">3</div>
<div class="abs" style="left:0px;top:258.7px;width:20px;height:1px;background:#cfcfcf;"></div>
<div class="t" style="left:7.63px;top:260.87px;font-size:10.5px;line-height:12.06px;color:#444;transform:scaleX(0.880);transform-origin:0 0;">4</div>
<div class="abs" style="left:0px;top:273.07px;width:20px;height:1px;background:#cfcfcf;"></div>
<div class="t" style="left:7.63px;top:275.25px;font-size:10.5px;line-height:12.06px;color:#444;transform:scaleX(0.880);transform-origin:0 0;">5</div>
<div class="abs" style="left:0px;top:287.45px;width:20px;height:1px;background:#cfcfcf;"></div>
<div class="t" style="left:7.63px;top:289.62px;font-size:10.5px;line-height:12.06px;color:#444;transform:scaleX(0.880);transform-origin:0 0;">6</div>
<div class="abs" style="left:0px;top:301.82px;width:20px;height:1px;background:#cfcfcf;"></div>
<div class="t" style="left:7.63px;top:304px;font-size:10.5px;line-height:12.06px;color:#444;transform:scaleX(0.880);transform-origin:0 0;">7</div>
<div class="abs" style="left:0px;top:316.2px;width:20px;height:1px;background:#cfcfcf;"></div>
<div class="t" style="left:7.63px;top:318.37px;font-size:10.5px;line-height:12.06px;color:#444;transform:scaleX(0.880);transform-origin:0 0;">8</div>
<div class="abs" style="left:0px;top:330.57px;width:20px;height:1px;background:#cfcfcf;"></div>
<div class="t" style="left:7.63px;top:332.75px;font-size:10.5px;line-height:12.06px;color:#444;transform:scaleX(0.880);transform-origin:0 0;">9</div>
<div class="abs" style="left:0px;top:344.95px;width:20px;height:1px;background:#cfcfcf;"></div>
<div class="t" style="left:5.06px;top:347.12px;font-size:10.5px;line-height:12.06px;color:#444;transform:scaleX(0.880);transform-origin:0 0;">10</div>
<div class="abs" style="left:0px;top:359.32px;width:20px;height:1px;background:#cfcfcf;"></div>
<div class="t" style="left:5.4px;top:375.87px;font-size:10.5px;line-height:12.06px;color:#217346;transform:scaleX(0.880);transform-origin:0 0;">11</div>
<div class="abs" style="left:0px;top:388.07px;width:20px;height:1px;background:#cfcfcf;"></div>
<div class="t" style="left:5.06px;top:390.25px;font-size:10.5px;line-height:12.06px;color:#444;transform:scaleX(0.880);transform-origin:0 0;">12</div>
<div class="abs" style="left:0px;top:402.45px;width:20px;height:1px;background:#cfcfcf;"></div>
<div class="t" style="left:5.06px;top:404.62px;font-size:10.5px;line-height:12.06px;color:#444;transform:scaleX(0.880);transform-origin:0 0;">13</div>
<div class="abs" style="left:0px;top:416.82px;width:20px;height:1px;background:#cfcfcf;"></div>
<div class="t" style="left:5.06px;top:419px;font-size:10.5px;line-height:12.06px;color:#444;transform:scaleX(0.880);transform-origin:0 0;">14</div>
<div class="abs" style="left:0px;top:431.2px;width:20px;height:1px;background:#cfcfcf;"></div>
<div class="t" style="left:5.06px;top:433.37px;font-size:10.5px;line-height:12.06px;color:#444;transform:scaleX(0.880);transform-origin:0 0;">15</div>
<div class="abs" style="left:0px;top:445.57px;width:20px;height:1px;background:#cfcfcf;"></div>
<div class="t" style="left:5.06px;top:447.75px;font-size:10.5px;line-height:12.06px;color:#444;transform:scaleX(0.880);transform-origin:0 0;">16</div>
<div class="abs" style="left:0px;top:459.95px;width:20px;height:1px;background:#cfcfcf;"></div>
<div class="t" style="left:5.06px;top:462.12px;font-size:10.5px;line-height:12.06px;color:#444;transform:scaleX(0.880);transform-origin:0 0;">17</div>
<div class="abs" style="left:0px;top:474.33px;width:20px;height:1px;background:#cfcfcf;"></div>
<div class="t" style="left:5.06px;top:476.5px;font-size:10.5px;line-height:12.06px;color:#444;transform:scaleX(0.880);transform-origin:0 0;">18</div>
<div class="abs" style="left:0px;top:488.7px;width:20px;height:1px;background:#cfcfcf;"></div>
<div class="t" style="left:5.06px;top:490.87px;font-size:10.5px;line-height:12.06px;color:#444;transform:scaleX(0.880);transform-origin:0 0;">19</div>
<div class="abs" style="left:0px;top:503.08px;width:20px;height:1px;background:#cfcfcf;"></div>
<div class="t" style="left:5.06px;top:505.25px;font-size:10.5px;line-height:12.06px;color:#444;transform:scaleX(0.880);transform-origin:0 0;">20</div>
<div class="abs" style="left:0px;top:517.45px;width:20px;height:1px;background:#cfcfcf;"></div>
<div class="t" style="left:5.06px;top:519.62px;font-size:10.5px;line-height:12.06px;color:#444;transform:scaleX(0.880);transform-origin:0 0;">21</div>
<div class="abs" style="left:0px;top:531.83px;width:20px;height:1px;background:#cfcfcf;"></div>
<div class="t" style="left:5.06px;top:534px;font-size:10.5px;line-height:12.06px;color:#444;transform:scaleX(0.880);transform-origin:0 0;">22</div>
<div class="abs" style="left:0px;top:546.2px;width:20px;height:1px;background:#cfcfcf;"></div>
<div class="t" style="left:5.06px;top:548.37px;font-size:10.5px;line-height:12.06px;color:#444;transform:scaleX(0.880);transform-origin:0 0;">23</div>
<div class="abs" style="left:0px;top:560.58px;width:20px;height:1px;background:#cfcfcf;"></div>
<div class="t" style="left:5.06px;top:562.75px;font-size:10.5px;line-height:12.06px;color:#444;transform:scaleX(0.880);transform-origin:0 0;">24</div>
<div class="abs" style="left:0px;top:574.95px;width:20px;height:1px;background:#cfcfcf;"></div>
<div class="t" style="left:5.06px;top:577.12px;font-size:10.5px;line-height:12.06px;color:#444;transform:scaleX(0.880);transform-origin:0 0;">25</div>
<svg class="abs" style="left:21px;top:259.5px;" width="3.6" height="3.6" viewBox="0 0 3.6 3.6"><path d="M0 0h3.600L0 3.600z" fill="#1f7a45"/></svg>
<svg class="abs" style="left:21px;top:273.88px;" width="3.6" height="3.6" viewBox="0 0 3.6 3.6"><path d="M0 0h3.600L0 3.600z" fill="#1f7a45"/></svg>
<svg class="abs" style="left:21px;top:288.25px;" width="3.6" height="3.6" viewBox="0 0 3.6 3.6"><path d="M0 0h3.600L0 3.600z" fill="#1f7a45"/></svg>
<svg class="abs" style="left:21px;top:302.62px;" width="3.6" height="3.6" viewBox="0 0 3.6 3.6"><path d="M0 0h3.600L0 3.600z" fill="#1f7a45"/></svg>
<svg class="abs" style="left:21px;top:317px;" width="3.6" height="3.6" viewBox="0 0 3.6 3.6"><path d="M0 0h3.600L0 3.600z" fill="#1f7a45"/></svg>
<svg class="abs" style="left:21px;top:331.38px;" width="3.6" height="3.6" viewBox="0 0 3.6 3.6"><path d="M0 0h3.600L0 3.600z" fill="#1f7a45"/></svg>
<div class="t" style="left:424px;top:160.92px;font-size:19.2px;line-height:22.06px;color:#111;font-weight:bold;transform:scaleX(1.019);transform-origin:0 0;">Выполнение учебной программы</div>
<div class="t" style="left:475px;top:189.92px;font-size:19.2px;line-height:22.06px;color:#111;font-weight:bold;transform:scaleX(1.038);transform-origin:0 0;">2024-2025 учебный год</div>
<div class="t" style="left:102px;top:247.38px;font-size:9.3px;line-height:10.69px;color:#111;font-weight:bold;transform:scaleX(1.005);transform-origin:0 0;">искусство)</div>
<div class="t" style="left:83px;top:232.98px;font-size:9.3px;line-height:10.69px;color:#111;font-weight:bold;transform:scaleX(1.039);transform-origin:0 0;">(Изобразительное</div>
<div class="t" style="left:103.5px;top:218.58px;font-size:9.3px;line-height:10.69px;color:#111;font-weight:bold;transform:scaleX(1.031);transform-origin:0 0;">Иванович</div>
<div class="t" style="left:183.5px;top:247.38px;font-size:9.3px;line-height:10.69px;color:#111;font-weight:bold;transform:scaleX(1.061);transform-origin:0 0;">Иванович (Музыка)</div>
<div class="t" style="left:200.5px;top:232.98px;font-size:9.3px;line-height:10.69px;color:#111;font-weight:bold;transform:scaleX(1.015);transform-origin:0 0;">Иванов Иван</div>
<div class="t" style="left:311.2px;top:247.38px;font-size:9.3px;line-height:10.69px;color:#111;font-weight:bold;">свой путь)</div>
<div class="t" style="left:294.7px;top:232.98px;font-size:9.3px;line-height:10.69px;color:#111;font-weight:bold;transform:scaleX(1.037);transform-origin:0 0;">Петровна (Найди</div>
<div class="t" style="left:306.2px;top:218.58px;font-size:9.3px;line-height:10.69px;color:#111;font-weight:bold;transform:scaleX(1.005);transform-origin:0 0;">Птрова Вера</div>
<div class="t" style="left:408.5px;top:247.38px;font-size:9.3px;line-height:10.69px;color:#111;font-weight:bold;transform:scaleX(1.055);transform-origin:0 0;">(Экология)</div>
<div class="t" style="left:412px;top:232.98px;font-size:9.3px;line-height:10.69px;color:#111;font-weight:bold;transform:scaleX(1.012);transform-origin:0 0;">Петрович</div>
<div class="t" style="left:393.5px;top:218.58px;font-size:9.3px;line-height:10.69px;color:#111;font-weight:bold;transform:scaleX(1.064);transform-origin:0 0;">Королев Максим</div>
<div class="t" style="left:45.89px;top:261.87px;font-size:9.4px;line-height:10.8px;color:#111;font-weight:bold;">4</div>
<div class="t" style="left:45.89px;top:276.24px;font-size:9.4px;line-height:10.8px;color:#111;font-weight:bold;">5</div>
<div class="t" style="left:45.89px;top:290.62px;font-size:9.4px;line-height:10.8px;color:#111;font-weight:bold;">6</div>
<div class="t" style="left:45.89px;top:304.99px;font-size:9.4px;line-height:10.8px;color:#111;font-weight:bold;">8</div>
<div class="t" style="left:45.89px;top:319.37px;font-size:9.4px;line-height:10.8px;color:#111;font-weight:bold;">9</div>
<div class="t" style="left:43.53px;top:333.74px;font-size:9.4px;line-height:10.8px;color:#111;font-weight:bold;">11</div>
<div class="t" style="left:33px;top:348.64px;font-size:8.6px;line-height:9.88px;color:#111;font-weight:bold;transform:scaleX(1.056);transform-origin:0 0;">ИТОГО</div>
<div class="t" style="left:24.5px;top:363.07px;font-size:8.9px;line-height:10.23px;color:#111;font-weight:bold;transform:scaleX(1.042);transform-origin:0 0;">Невыполн</div>
<div class="t" style="left:36.5px;top:377.22px;font-size:8.9px;line-height:10.23px;color:#111;font-weight:bold;transform:scaleX(1.157);transform-origin:0 0;">ение</div>
<div class="t" style="left:111.84px;top:276.24px;font-size:9.4px;line-height:10.8px;color:#333;">33</div>
<div class="t" style="left:164.84px;top:276.24px;font-size:9.4px;line-height:10.8px;color:#333;">33</div>
<div class="t" style="left:217.84px;top:276.24px;font-size:9.4px;line-height:10.8px;color:#333;">33</div>
<div class="t" style="left:272.84px;top:276.24px;font-size:9.4px;line-height:10.8px;color:#333;">31</div>
<div class="t" style="left:325.84px;top:276.24px;font-size:9.4px;line-height:10.8px;color:#333;">33</div>
<div class="t" style="left:373.84px;top:276.24px;font-size:9.4px;line-height:10.8px;color:#333;">33</div>
<div class="t" style="left:111.84px;top:290.62px;font-size:9.4px;line-height:10.8px;color:#333;">33</div>
<div class="t" style="left:164.84px;top:290.62px;font-size:9.4px;line-height:10.8px;color:#333;">32</div>
<div class="t" style="left:217.84px;top:290.62px;font-size:9.4px;line-height:10.8px;color:#333;">38</div>
<div class="t" style="left:272.84px;top:290.62px;font-size:9.4px;line-height:10.8px;color:#333;">38</div>
<div class="t" style="left:421.84px;top:290.62px;font-size:9.4px;line-height:10.8px;color:#333;">33</div>
<div class="t" style="left:469.84px;top:290.62px;font-size:9.4px;line-height:10.8px;color:#333;">33</div>
<div class="t" style="left:217.84px;top:304.99px;font-size:9.4px;line-height:10.8px;color:#333;">36</div>
<div class="t" style="left:272.84px;top:304.99px;font-size:9.4px;line-height:10.8px;color:#333;">36</div>
<div class="t" style="left:111.84px;top:348.12px;font-size:9.4px;line-height:10.8px;color:#5a2020;">66</div>
<div class="t" style="left:164.84px;top:348.12px;font-size:9.4px;line-height:10.8px;color:#5a2020;">65</div>
<div class="t" style="left:212.62px;top:348.12px;font-size:9.4px;line-height:10.8px;color:#5a2020;">107</div>
<div class="t" style="left:267.62px;top:348.12px;font-size:9.4px;line-height:10.8px;color:#5a2020;">105</div>
<div class="t" style="left:325.84px;top:348.12px;font-size:9.4px;line-height:10.8px;color:#5a2020;">33</div>
<div class="t" style="left:373.84px;top:348.12px;font-size:9.4px;line-height:10.8px;color:#5a2020;">33</div>
<div class="t" style="left:421.84px;top:348.12px;font-size:9.4px;line-height:10.8px;color:#5a2020;">33</div>
<div class="t" style="left:469.84px;top:348.12px;font-size:9.4px;line-height:10.8px;color:#5a2020;">33</div>
<div class="t" style="left:170.07px;top:376.87px;font-size:9.4px;line-height:10.8px;color:#e0413a;">1</div>
<div class="t" style="left:278.07px;top:376.87px;font-size:9.4px;line-height:10.8px;color:#e0413a;">2</div>
<div class="abs" style="left:385.7px;top:359px;width:97.8px;height:30.4px;border:1.500px solid #217346;"></div>
<div class="abs" style="left:480.7px;top:386.5px;width:3.6px;height:3.6px;background:#217346;border:.7px solid #fff;"></div>
<svg class="abs" style="left:687px;top:341.5px;" width="10" height="10" viewBox="0 0 10 10"><path d="M3.500 .8h3v2.700h2.700v3H6.500v2.700h-3V6.500H.8v-3h2.700z" fill="#fff" stroke="#111" stroke-width="1"/></svg>
<div class="abs" style="left:1137px;top:141.7px;width:15px;height:442.3px;background:#e6e6e6;"></div>
<div class="abs" style="left:1138.7px;top:155.5px;width:11.3px;height:399.5px;background:#fdfdfd;border:1px solid #d9d9d9;"></div>
<div class="abs" style="left:1136.2px;top:156.5px;width:1px;height:427.5px;background:#b1b1b1;"></div>
<div class="abs" style="left:1138.7px;top:143.8px;width:11.3px;height:10.6px;background:#fdfdfd;border:1px solid #dcdcdc;"></div>
<svg class="abs" style="left:1141.3px;top:147.2px;" width="6" height="4" viewBox="0 0 6 4"><path d="M0 4h6L3 .5z" fill="#808080"/></svg>
<div class="abs" style="left:1138.7px;top:572.5px;width:11.3px;height:11px;background:#fdfdfd;border:1px solid #dcdcdc;"></div>
<svg class="abs" style="left:1141.3px;top:576.5px;" width="6" height="4" viewBox="0 0 6 4"><path d="M0 0h6L3 3.500z" fill="#777"/></svg>
<div class="abs" style="left:1138.7px;top:555px;width:11.3px;height:17px;background:#dadada;"></div>
<div class="abs" style="left:0px;top:584px;width:1152px;height:18px;background:#e6e6e6;"></div>
<div class="abs" style="left:0px;top:584px;width:1137px;height:1px;background:#b5b5b5;"></div>
<svg class="abs" style="left:17px;top:590px;" width="4" height="6" viewBox="0 0 4 6"><path d="M3.500 .5L.8 3l2.700 2.500z" fill="#c4c4c4"/></svg>
<svg class="abs" style="left:34px;top:590px;" width="4" height="6" viewBox="0 0 4 6"><path d="M.5 .5L3.200 3 .5 5.500z" fill="#c4c4c4"/></svg>
<div class="abs" style="left:62px;top:584px;width:43.5px;height:16px;background:#fdfdfd;"></div>
<div class="abs" style="left:62px;top:598.8px;width:43.5px;height:1.1px;background:#217346;"></div>
<div class="t" style="left:69.1px;top:585.91px;font-size:10.6px;line-height:12.18px;color:#217346;font-weight:bold;transform:scaleX(0.931);transform-origin:0 0;">Лист1</div>
<svg class="abs" style="left:124.5px;top:587px;" width="12" height="12" viewBox="0 0 12 12"><circle cx="6" cy="6" r="5.200" fill="none" stroke="#777" stroke-width=".9"/><path d="M6 3.200v5.600M3.200 6h5.600" stroke="#777" stroke-width=".9"/></svg>
<div class="abs" style="left:689.5px;top:589.5px;width:1px;height:1.2px;background:#9a9a9a;"></div>
<div class="abs" style="left:689.5px;top:592.5px;width:1px;height:1.2px;background:#9a9a9a;"></div>
<div class="abs" style="left:689.5px;top:595.5px;width:1px;height:1.2px;background:#9a9a9a;"></div>
<div class="abs" style="left:700.5px;top:588px;width:10px;height:10.5px;background:#fff;border:1px solid #d8d8d8;"></div>
<svg class="abs" style="left:703.5px;top:590.5px;" width="4" height="6" viewBox="0 0 4 6"><path d="M3.800 .3L.5 3l3.300 2.700z" fill="#666"/></svg>
<div class="abs" style="left:712px;top:588px;width:396px;height:10.5px;background:#fff;border:1px solid #cfcfcf;"></div>
<div class="abs" style="left:1107.5px;top:587.7px;width:18px;height:10.8px;background:#d6d6d6;"></div>
<div class="abs" style="left:1125.5px;top:588px;width:10px;height:10.5px;background:#fff;border:1px solid #d8d8d8;"></div>
<svg class="abs" style="left:1129px;top:590.5px;" width="4" height="6" viewBox="0 0 4 6"><path d="M.3 .3L3.600 3 .3 5.700z" fill="#666"/></svg>
<div class="abs" style="left:0px;top:602px;width:1152px;height:16.5px;background:#f1f1f1;"></div>
<div class="abs" style="left:0px;top:601.5px;width:1152px;height:1px;background:#dcdcdc;"></div>
<div class="t" style="left:3.8px;top:606.08px;font-size:8.2px;line-height:9.42px;color:#555;transform:scaleX(1.007);transform-origin:0 0;">Готово</div>
<div class="abs" style="left:949.5px;top:602.5px;width:24.5px;height:15.5px;background:#d6d6d6;"></div>
<svg class="abs" style="left:957.5px;top:604.8px;" width="9" height="9" viewBox="0 0 9 9"><rect x=".5" y=".5" width="8" height="8" fill="none" stroke="#6a6a6a" stroke-width=".9"/><path d="M.5 3.200h8M.5 5.800h8M3.200 .5v8M5.800 .5v8" stroke="#6a6a6a" stroke-width=".7"/></svg>
<svg class="abs" style="left:981.5px;top:604.8px;" width="9" height="9" viewBox="0 0 9 9"><rect x=".5" y=".5" width="8" height="8" fill="none" stroke="#6a6a6a" stroke-width=".9"/><rect x="2.600" y="2.600" width="3.800" height="3.800" fill="none" stroke="#6a6a6a" stroke-width=".8"/></svg>
<svg class="abs" style="left:1006px;top:604.8px;" width="9" height="9" viewBox="0 0 9 9"><rect x=".5" y=".5" width="8" height="8" fill="none" stroke="#6a6a6a" stroke-width=".9"/><path d="M4.500 .5v4.500H.5M4.500 5h4" fill="none" stroke="#6a6a6a" stroke-width=".8"/></svg>
<div class="abs" style="left:1026px;top:609.2px;width:5.5px;height:1.2px;background:#555;"></div>
<div class="abs" style="left:1034px;top:609.4px;width:75px;height:1px;background:#cdcdcd;"></div>
<div class="abs" style="left:1070px;top:605px;width:2.8px;height:9px;background:#5f5f5f;"></div>
<svg class="abs" style="left:1110.5px;top:605.8px;" width="8" height="8" viewBox="0 0 8 8"><path d="M4 .5v7M.5 4h7" stroke="#555" stroke-width="1.200"/></svg>
<div class="t" style="left:1127.5px;top:606.06px;font-size:8px;line-height:9.19px;color:#666;transform:scaleX(0.904);transform-origin:0 0;">100%</div>
<div class="abs" style="left:0px;top:617.8px;width:1152px;height:30.2px;background:linear-gradient(90deg,#3a2f28 0%,#3a3028 22%,#3b3027 41%,#383021 52%,#2e321f 56%,#23261e 62%,#36321f 68%,#293020 73%,#36301f 76%,#3a2f25 80%,#3e3527 100%);"></div>
<div class="abs" style="left:0px;top:617.8px;width:36px;height:30.2px;background:#1c2225;"></div>
<svg class="abs" style="left:11px;top:626.5px;" width="14" height="14" viewBox="0 0 14 14"><path d="M.5 2.300l5.500-.8v5.200H.5zM6.800 1.400L13.500.4v6.300H6.800zM.5 7.500H6v5.200l-5.500-.8zM6.800 7.500h6.700v6.100l-6.700-1z" fill="#fff"/></svg>
<div class="abs" style="left:35.9px;top:617.8px;width:215.8px;height:30.2px;background:#f2f2f2;"></div>
<svg class="abs" style="left:45px;top:626.5px;" width="12" height="13" viewBox="0 0 12 13"><circle cx="7.300" cy="4.800" r="3.900" fill="none" stroke="#222" stroke-width="1.200"/><path d="M4.600 7.800L.8 12.200" stroke="#222" stroke-width="1.300"/></svg>
<div class="t" style="left:66px;top:627.54px;font-size:11px;line-height:12.64px;color:#444;transform:scaleX(1.066);transform-origin:0 0;">Поиск</div>
<svg class="abs" style="left:263px;top:626.5px;" width="14" height="13" viewBox="0 0 14 13"><rect x="1.500" y="2.500" width="8" height="8" fill="none" stroke="#ddd" stroke-width="1"/><path d="M1.500 .5h8M1.500 12.500h8M12 3v1.500M12 6v1.500M12 9v1.500" stroke="#ddd" stroke-width="1"/></svg>
<svg class="abs" style="left:299.3px;top:624px;" width="18" height="18" viewBox="0 0 18 18"><defs><linearGradient id="eg" x1="0" y1="0" x2="1" y2="1"><stop offset="0" stop-color="#35c1f1"/><stop offset=".5" stop-color="#1b8fd8"/><stop offset="1" stop-color="#2fc16a"/></linearGradient></defs><circle cx="9" cy="9" r="8.300" fill="url(#eg)"/><path d="M4 12c-1.500-5 3-8.500 7-7 2.500 1 3.500 3 3 4.500-.8 2-4.500 2-5-.5C6 9 5.500 13 9.500 15.500 7 16 5 14.500 4 12z" fill="#0c59a4" opacity=".75"/></svg>
<div class="abs" style="left:293.4px;top:646.3px;width:30.6px;height:1.7px;background:#76b9ed;"></div>
<svg class="abs" style="left:337px;top:624.5px;" width="18" height="17" viewBox="0 0 18 17"><path d="M1 3h6l1.500 2H17v10H1z" fill="#e8a521"/><path d="M1 6.500h16V15H1z" fill="#f8d26a"/><path d="M3.500 10h11v5h-11z" fill="#3a96dd"/><path d="M6.500 12h5v3h-5z" fill="#f8d26a"/></svg>
<div class="abs" style="left:330.7px;top:646.3px;width:30.6px;height:1.7px;background:#76b9ed;"></div>
<svg class="abs" style="left:374px;top:623.5px;" width="17" height="19" viewBox="0 0 17 19"><path d="M5.500 5V3.500a3 3 0 0 1 6 0V5" fill="none" stroke="#1f9bd7" stroke-width="1.200"/><rect x="1" y="5" width="15" height="13" rx="1.500" fill="#f3f3f3"/><rect x="5" y="8.500" width="3" height="3" fill="#f25022"/><rect x="9" y="8.500" width="3" height="3" fill="#7fba00"/><rect x="5" y="12.500" width="3" height="3" fill="#00a4ef"/><rect x="9" y="12.500" width="3" height="3" fill="#ffb900"/></svg>
<svg class="abs" style="left:410px;top:624.5px;" width="19" height="17" viewBox="0 0 19 17"><path d="M7 3.500L13.500.5 18.500 4v10l-5 2.500-6.500-2z" fill="#1a8ae0"/><path d="M9 6l9.500-1.500V14L9 15z" fill="#5cc0f5"/><rect x=".5" y="4.500" width="10" height="10" rx="1.500" fill="#0a62b8"/><circle cx="5.500" cy="9.500" r="2.500" fill="none" stroke="#fff" stroke-width="1.400"/></svg>
<div class="abs" style="left:439px;top:617.8px;width:37px;height:30.2px;background:#57524d;"></div>
<div class="abs" style="left:439px;top:646.3px;width:37px;height:1.7px;background:#8ac0ee;"></div>
<svg class="abs" style="left:447.5px;top:624.5px;" width="19" height="17" viewBox="0 0 19 17"><rect x="6" y="1" width="12.500" height="15" rx="1" fill="#1d6f42"/><path d="M10 3.500h7M10 6.500h7M10 9.500h7M10 12.500h7M13.500 1.500v14" stroke="#bfe3cf" stroke-width=".9"/><rect x=".5" y="3.500" width="10" height="10" rx="1" fill="#107c41"/><path d="M3.200 6l4.600 5M7.800 6l-4.600 5" stroke="#fff" stroke-width="1.400"/></svg>
<svg class="abs" style="left:930px;top:629.5px;" width="9" height="6" viewBox="0 0 9 6"><path d="M.8 5l3.700-3.800L8.200 5" fill="none" stroke="#e8e8e8" stroke-width="1.100"/></svg>
<svg class="abs" style="left:948px;top:627.5px;" width="10" height="11" viewBox="0 0 10 11"><rect x=".8" y="2.500" width="6.400" height="6" rx="1" fill="none" stroke="#e8e8e8" stroke-width="1"/><path d="M2 1h4M2 10h4M7.500 4.500h1.800v2.500H7.500" fill="none" stroke="#e8e8e8" stroke-width=".9"/></svg>
<svg class="abs" style="left:967px;top:626.5px;" width="7" height="12" viewBox="0 0 7 12"><rect x="1" y=".5" width="5" height="8.500" rx="1" fill="#f0f0f0"/><path d="M.3 10.500h6.400" stroke="#f0f0f0" stroke-width="1.500"/></svg>
<svg class="abs" style="left:982px;top:628.5px;" width="13" height="9" viewBox="0 0 13 9"><rect x="2" y="1.500" width="10.500" height="6" fill="#f0f0f0"/><path d="M.3 3h2v3h-2z" fill="#f0f0f0"/><path d="M4 .5v1M8 .5v1" stroke="#f0f0f0"/></svg>
<svg class="abs" style="left:1001px;top:627.5px;" width="11" height="11" viewBox="0 0 11 11"><path d="M1 10C1 5 5 1 10 1M3.800 10c0-3.500 2.700-6.200 6.200-6.200M6.600 10c0-2 1.400-3.400 3.400-3.400" fill="none" stroke="#bdbdbd" stroke-width="1"/><circle cx="9.300" cy="9.300" r="1" fill="#bdbdbd"/></svg>
<svg class="abs" style="left:1017px;top:627.5px;" width="14" height="11" viewBox="0 0 14 11"><path d="M.8 3.800h2.400L6 1.200v8.600L3.200 7.200H.8z" fill="none" stroke="#e8e8e8" stroke-width=".9"/><path d="M8 3.500c.9 1 .9 3 0 4M9.800 2c1.700 2 1.700 5 0 7M11.600 .8c2.300 2.800 2.300 6.600 0 9.400" fill="none" stroke="#e8e8e8" stroke-width=".8"/></svg>
<div class="t" style="left:1039.5px;top:629.49px;font-size:8.3px;line-height:9.54px;color:#f0f0f0;transform:scaleX(0.933);transform-origin:0 0;">РУС</div>
<div class="t" style="left:1075.5px;top:621.99px;font-size:8.3px;line-height:9.54px;color:#f0f0f0;transform:scaleX(1.011);transform-origin:0 0;">15:07</div>
<div class="t" style="left:1065px;top:635.99px;font-size:8.3px;line-height:9.54px;color:#f0f0f0;transform:scaleX(1.011);transform-origin:0 0;">20.05.2025</div>
<svg class="abs" style="left:1121px;top:626.5px;" width="13" height="12" viewBox="0 0 13 12"><path d="M.3 .3h12v8.700H5.500l-2.500 2.500V9H.3z" fill="#f2f2f2"/><path d="M2 2.600h8.500M2 4.600h8.500M2 6.600h8.500" stroke="#4a4036" stroke-width=".8"/></svg>
<div class="abs" style="left:1127.5px;top:633.3px;width:11px;height:11px;background:#2d2622;border-radius:50%;border:.9px solid #cfcfcf;"></div>
<div class="t" style="left:1130.78px;top:634.56px;font-size:8px;line-height:9.19px;color:#eee;font-weight:bold;">4</div>
<div class="abs" style="left:1148px;top:618.5px;width:1px;height:29.5px;background:#8a8676;"></div>
<div class="abs" style="left:364.5px;top:555.7px;width:422px;height:32.3px;background:#fff;box-shadow:0 1px 5px rgba(0,0,0,.35);border-radius:1.500px;"></div>
<div class="abs" style="left:373px;top:568px;width:0.8px;height:7px;background:#bbb;"></div>
<div class="abs" style="left:375.3px;top:568px;width:0.8px;height:7px;background:#bbb;"></div>
<div class="t" style="left:384.5px;top:567.02px;font-size:8.6px;line-height:9.88px;color:#222;transform:scaleX(1.029);transform-origin:0 0;">web.vk.me предоставляет доступ к вашему экрану.</div>
<div class="abs" style="left:601px;top:559.5px;width:135.5px;height:24px;background:#0b74db;border-radius:2px;"></div>
<div class="t" style="left:612.55px;top:567.04px;font-size:8.8px;line-height:10.11px;color:#fff;font-weight:bold;transform:scaleX(0.977);transform-origin:0 0;">Прекратить общий доступ</div>
<div class="t" style="left:745.5px;top:567.04px;font-size:8.8px;line-height:10.11px;color:#0b62c9;transform:scaleX(1.065);transform-origin:0 0;text-decoration:underline;">Скрыть</div>
</div>
<!-- overlay pills -->
<div class="abs" style="left:15px;top:20px;width:238px;height:43px;border-radius:22px;background:rgba(0,0,0,.30);border:1px solid rgba(255,255,255,.10)"></div>
<svg class="abs" style="left:33px;top:32px" width="17" height="17" viewBox="0 0 17 17"><path d="M10.500 .8l5.300 5.400-3.600 1-1.400 1.400.4 6.400-4.200-4.100-5.700 5.300-.5-.5 5.300-5.700L2 5.800l6.400.4 1.400-1.400z" fill="#fff"/></svg>
<div class="t" style="left:56.500px;top:32px;font-size:16.350px;color:#fff;-webkit-text-stroke:.25px #fff;text-shadow:0 0 3px rgba(0,0,0,.55)">Экран Наталия Галкина</div>
<div class="abs" style="left:263px;top:20px;width:149px;height:43px;border-radius:22px;background:rgba(0,0,0,.30);border:1px solid rgba(255,255,255,.10)"></div>
<div class="abs" style="left:269px;top:26.500px;width:92px;height:30.500px;border-radius:16px;background:rgba(255,255,255,.14)"></div>
<div class="abs" style="left:280.500px;top:33.800px;width:16.800px;height:14.400px;border-radius:4px;background:#fff"></div>
<svg class="abs" style="left:284px;top:35.800px" width="10" height="11" viewBox="0 0 10 11" fill="none" stroke="#2b4a3a" stroke-width="1.900" stroke-linecap="round" stroke-linejoin="round"><path d="M5 9.500V2M2 4.800l3-3 3 3"/></svg>
<div class="t" style="left:304.500px;top:32px;font-size:16.350px;color:#fff;-webkit-text-stroke:.25px #fff;text-shadow:0 0 3px rgba(0,0,0,.55)">Экран</div>
<svg class="abs" style="left:377px;top:32.500px" width="19" height="15" viewBox="0 0 19 15"><rect x=".5" y="1.500" width="12.500" height="12" rx="3.200" fill="#fff"/><path d="M13.500 6.200l3.600-2.900c.6-.5 1.400-.1 1.400.7v7c0 .8-.8 1.200-1.400.7l-3.600-2.900z" fill="#fff"/></svg>
</div>
</div></body></html>
